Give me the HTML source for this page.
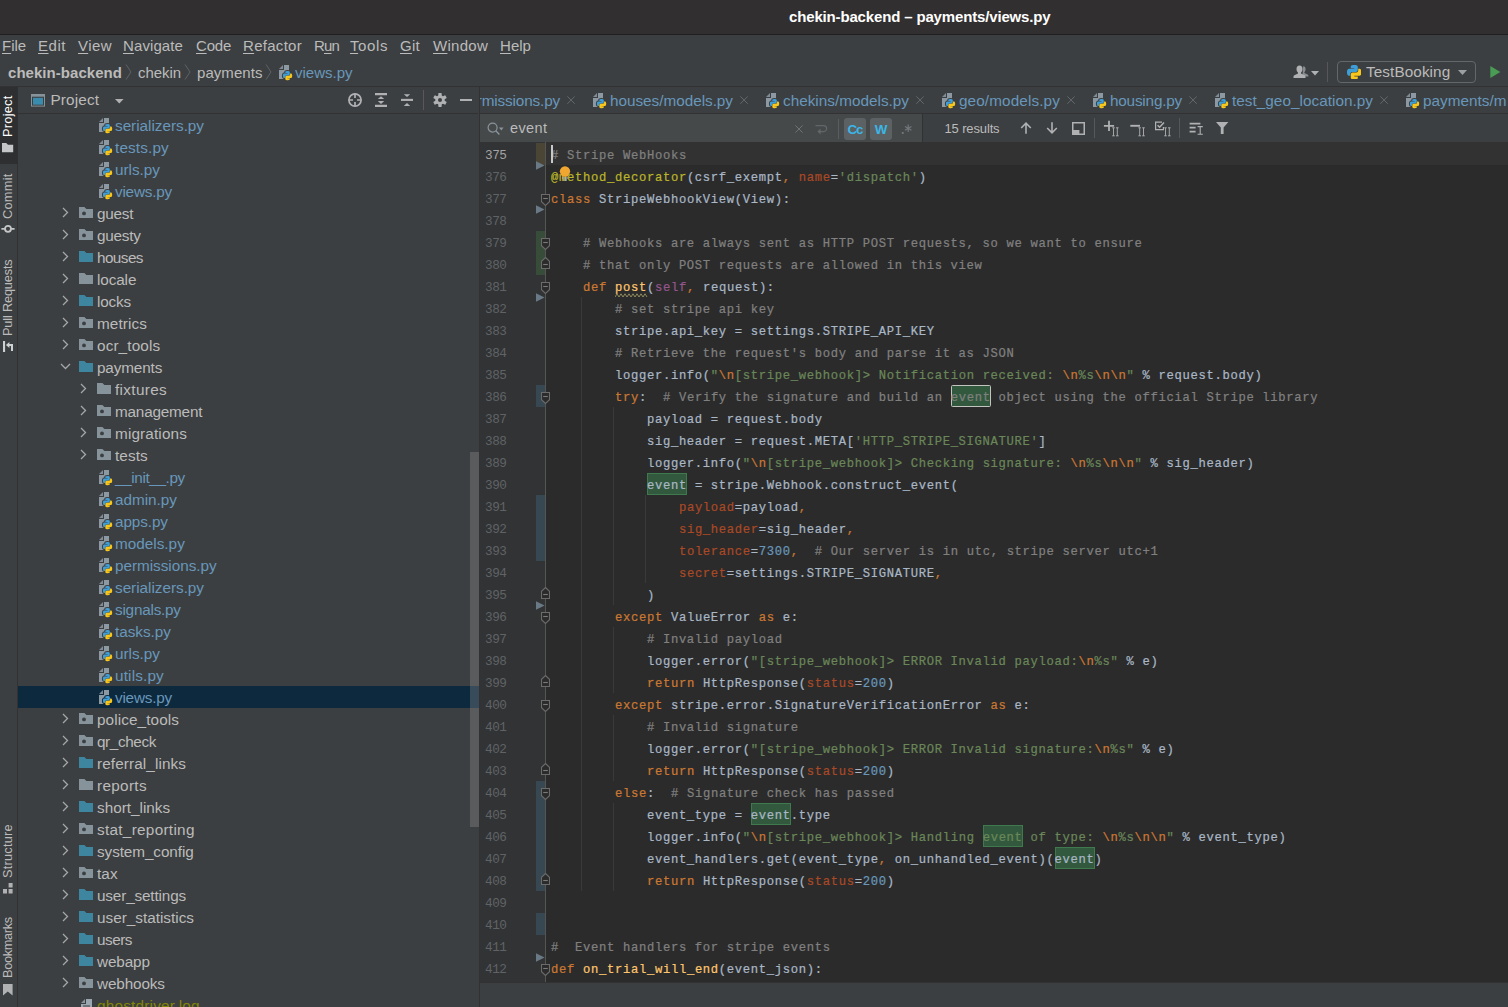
<!DOCTYPE html>
<html><head><meta charset="utf-8"><title>chekin-backend – payments/views.py</title>
<style>html,body{margin:0;padding:0}body{width:1508px;height:1007px;background:#3c3f41;position:relative;overflow:hidden;font-family:"Liberation Sans",sans-serif}</style>
</head><body>
<div style="position:absolute;left:0;top:0;width:1508px;height:34px;background:#322f30"></div>
<div style="position:absolute;left:0;top:34px;width:1508px;height:1px;background:#201f1f"></div>
<div style="position:absolute;left:789px;top:9px;font:bold 15px/1 'Liberation Sans', sans-serif;color:#ffffff;white-space:pre;letter-spacing:-0.155px;">chekin-backend – payments/views.py</div>
<div style="position:absolute;left:2px;top:38px;font:15px/1 'Liberation Sans', sans-serif;color:#bbbbbb;white-space:pre;letter-spacing:-0.043px"><span style="text-decoration:underline;text-underline-offset:1.5px">F</span>ile</div>
<div style="position:absolute;left:38px;top:38px;font:15px/1 'Liberation Sans', sans-serif;color:#bbbbbb;white-space:pre;letter-spacing:0.535px"><span style="text-decoration:underline;text-underline-offset:1.5px">E</span>dit</div>
<div style="position:absolute;left:78px;top:38px;font:15px/1 'Liberation Sans', sans-serif;color:#bbbbbb;white-space:pre;letter-spacing:0.438px"><span style="text-decoration:underline;text-underline-offset:1.5px">V</span>iew</div>
<div style="position:absolute;left:123px;top:38px;font:15px/1 'Liberation Sans', sans-serif;color:#bbbbbb;white-space:pre;letter-spacing:0.100px"><span style="text-decoration:underline;text-underline-offset:1.5px">N</span>avigate</div>
<div style="position:absolute;left:196px;top:38px;font:15px/1 'Liberation Sans', sans-serif;color:#bbbbbb;white-space:pre;letter-spacing:-0.215px"><span style="text-decoration:underline;text-underline-offset:1.5px">C</span>ode</div>
<div style="position:absolute;left:243px;top:38px;font:15px/1 'Liberation Sans', sans-serif;color:#bbbbbb;white-space:pre;letter-spacing:0.287px"><span style="text-decoration:underline;text-underline-offset:1.5px">R</span>efactor</div>
<div style="position:absolute;left:314px;top:38px;font:15px/1 'Liberation Sans', sans-serif;color:#bbbbbb;white-space:pre;letter-spacing:-0.844px">R<span style="text-decoration:underline;text-underline-offset:1.5px">u</span>n</div>
<div style="position:absolute;left:350px;top:38px;font:15px/1 'Liberation Sans', sans-serif;color:#bbbbbb;white-space:pre;letter-spacing:0.594px"><span style="text-decoration:underline;text-underline-offset:1.5px">T</span>ools</div>
<div style="position:absolute;left:400px;top:38px;font:15px/1 'Liberation Sans', sans-serif;color:#bbbbbb;white-space:pre;letter-spacing:0.276px"><span style="text-decoration:underline;text-underline-offset:1.5px">G</span>it</div>
<div style="position:absolute;left:433px;top:38px;font:15px/1 'Liberation Sans', sans-serif;color:#bbbbbb;white-space:pre;letter-spacing:0.273px"><span style="text-decoration:underline;text-underline-offset:1.5px">W</span>indow</div>
<div style="position:absolute;left:500px;top:38px;font:15px/1 'Liberation Sans', sans-serif;color:#bbbbbb;white-space:pre;letter-spacing:0.035px"><span style="text-decoration:underline;text-underline-offset:1.5px">H</span>elp</div>
<div style="position:absolute;left:8px;top:65px;font:bold 15px/1 'Liberation Sans', sans-serif;color:#bbbbbb;white-space:pre;letter-spacing:0.045px;">chekin-backend</div>
<div style="position:absolute;left:138px;top:65px;font:normal 15px/1 'Liberation Sans', sans-serif;color:#bbbbbb;white-space:pre;letter-spacing:-0.060px;">chekin</div>
<div style="position:absolute;left:197px;top:65px;font:normal 15px/1 'Liberation Sans', sans-serif;color:#bbbbbb;white-space:pre;letter-spacing:0.057px;">payments</div>
<div style="position:absolute;left:295px;top:65px;font:normal 15px/1 'Liberation Sans', sans-serif;color:#6897bb;white-space:pre;letter-spacing:-0.004px;">views.py</div>
<svg style="position:absolute;left:125px;top:64.3px" width="7" height="16" viewBox="0 0 7 16"><path d="M1,0.5 L6,8 L1,15.5" fill="none" stroke="#5f6365" stroke-width="1"/></svg>
<svg style="position:absolute;left:184px;top:64.3px" width="7" height="16" viewBox="0 0 7 16"><path d="M1,0.5 L6,8 L1,15.5" fill="none" stroke="#5f6365" stroke-width="1"/></svg>
<svg style="position:absolute;left:265px;top:64.3px" width="7" height="16" viewBox="0 0 7 16"><path d="M1,0.5 L6,8 L1,15.5" fill="none" stroke="#5f6365" stroke-width="1"/></svg>
<svg style="position:absolute;left:278px;top:64px" width="16" height="17" viewBox="0 0 16 17"><path d="M1,5 L5,1 V5 Z" fill="#8c99a2" opacity=".85"/><path d="M6,1 H11 V15 H1 V6 H6 Z" fill="#8c99a2"/><g transform="translate(4.9,7) scale(.93)"><path d="M4.9,0 C2.4,0 2.6,1.1 2.6,1.1 V2.2 H5 V2.6 H1.6 C1.6,2.6 0,2.4 0,5 C0,7.5 1.4,7.4 1.4,7.4 H2.3 V6.2 C2.3,6.2 2.2,4.8 3.7,4.8 H6.1 C6.1,4.8 7.4,4.8 7.4,3.5 V1.3 C7.4,1.3 7.6,0 4.9,0 Z" fill="#3c3f41" stroke="#3c3f41" stroke-width="2.2" stroke-linejoin="round"/><path d="M5.1,10 C7.6,10 7.4,8.9 7.4,8.9 V7.8 H5 V7.4 H8.4 C8.4,7.4 10,7.6 10,5 C10,2.5 8.6,2.6 8.6,2.6 H7.7 V3.8 C7.7,3.8 7.8,5.2 6.3,5.2 H3.9 C3.9,5.2 2.6,5.2 2.6,6.5 V8.7 C2.6,8.7 2.4,10 5.1,10 Z" fill="#3c3f41" stroke="#3c3f41" stroke-width="2.2" stroke-linejoin="round"/><path d="M4.9,0 C2.4,0 2.6,1.1 2.6,1.1 V2.2 H5 V2.6 H1.6 C1.6,2.6 0,2.4 0,5 C0,7.5 1.4,7.4 1.4,7.4 H2.3 V6.2 C2.3,6.2 2.2,4.8 3.7,4.8 H6.1 C6.1,4.8 7.4,4.8 7.4,3.5 V1.3 C7.4,1.3 7.6,0 4.9,0 Z" fill="#3e9fd8"/><path d="M5.1,10 C7.6,10 7.4,8.9 7.4,8.9 V7.8 H5 V7.4 H8.4 C8.4,7.4 10,7.6 10,5 C10,2.5 8.6,2.6 8.6,2.6 H7.7 V3.8 C7.7,3.8 7.8,5.2 6.3,5.2 H3.9 C3.9,5.2 2.6,5.2 2.6,6.5 V8.7 C2.6,8.7 2.4,10 5.1,10 Z" fill="#f9c71b"/></g></svg>
<svg style="position:absolute;left:1293px;top:65px" width="16" height="14" viewBox="0 0 16 14"><path d="M10.2,1.2 c1.6,0 2.4,1.2 2.4,2.8 c0,1.6 -0.7,2.6 -1.2,3.1 v0.9 l3.2,1.6 c0.5,0.3 0.8,0.7 0.8,1.3 v0.6 h-6 z" fill="#8a8d8f"/><path d="M6.5,0.6 c2,0 3,1.4 3,3.3 c0,1.8 -0.8,3 -1.5,3.6 v1 l3.6,1.8 c0.6,0.3 0.9,0.8 0.9,1.4 v1.3 h-12 v-1.3 c0,-0.6 0.3,-1.1 0.9,-1.4 l3.6,-1.8 v-1 c-0.7,-0.6 -1.5,-1.8 -1.5,-3.6 c0,-1.9 1,-3.3 3,-3.3 z" fill="#afb1b3"/></svg>
<svg style="position:absolute;left:1311px;top:70.5px" width="8" height="5" viewBox="0 0 8 5"><path d="M0,0 H8 L4,4.4 Z" fill="#afb1b3"/></svg>
<div style="position:absolute;left:1327px;top:62px;width:1px;height:20px;background:#555759"></div>
<div style="position:absolute;left:1337px;top:61px;width:137px;height:20px;border:1px solid #646769;border-radius:4px;box-sizing:content-box"></div>
<svg style="position:absolute;left:1346.8px;top:64.6px" width="14.6" height="14.6" viewBox="0 0 10 10"><path d="M4.9,0 C2.4,0 2.6,1.1 2.6,1.1 V2.2 H5 V2.6 H1.6 C1.6,2.6 0,2.4 0,5 C0,7.5 1.4,7.4 1.4,7.4 H2.3 V6.2 C2.3,6.2 2.2,4.8 3.7,4.8 H6.1 C6.1,4.8 7.4,4.8 7.4,3.5 V1.3 C7.4,1.3 7.6,0 4.9,0 Z" fill="#3e9fd8"/><path d="M5.1,10 C7.6,10 7.4,8.9 7.4,8.9 V7.8 H5 V7.4 H8.4 C8.4,7.4 10,7.6 10,5 C10,2.5 8.6,2.6 8.6,2.6 H7.7 V3.8 C7.7,3.8 7.8,5.2 6.3,5.2 H3.9 C3.9,5.2 2.6,5.2 2.6,6.5 V8.7 C2.6,8.7 2.4,10 5.1,10 Z" fill="#f9c71b"/></svg>
<div style="position:absolute;left:1366px;top:64px;font:normal 15.3px/1 'Liberation Sans', sans-serif;color:#bbbbbb;white-space:pre;letter-spacing:0.087px;">TestBooking</div>
<svg style="position:absolute;left:1457.5px;top:70px" width="9" height="5" viewBox="0 0 9 5"><path d="M0,0 H9 L4.5,5 Z" fill="#9da0a2"/></svg>
<svg style="position:absolute;left:1490px;top:66px" width="11" height="12" viewBox="0 0 11 12"><path d="M0.3,0 L10.3,6 L0.3,12 Z" fill="#499c54"/></svg>
<div style="position:absolute;left:0;top:86px;width:1508px;height:1px;background:#323232"></div>
<div style="position:absolute;left:0;top:87px;width:17px;height:920px;background:#3c3f41"></div>
<div style="position:absolute;left:17px;top:87px;width:1px;height:920px;background:#323232"></div>
<div style="position:absolute;left:0;top:87px;width:18px;height:76.5px;background:#2d2f30"></div>
<div style="position:absolute;left:0px;top:137px;width:41.5px;height:15px;transform-origin:0 0;transform:rotate(-90deg);font:12.8px/15px 'Liberation Sans', sans-serif;color:#ffffff;white-space:pre;letter-spacing:0.239px">Project</div>
<div style="position:absolute;left:0px;top:218.8px;width:45.60000000000002px;height:15px;transform-origin:0 0;transform:rotate(-90deg);font:12.8px/15px 'Liberation Sans', sans-serif;color:#bbbbbb;white-space:pre;letter-spacing:0.254px">Commit</div>
<div style="position:absolute;left:0px;top:335.5px;width:76.5px;height:15px;transform-origin:0 0;transform:rotate(-90deg);font:12.8px/15px 'Liberation Sans', sans-serif;color:#bbbbbb;white-space:pre;letter-spacing:-0.190px">Pull Requests</div>
<div style="position:absolute;left:0px;top:877.8px;width:53.799999999999955px;height:15px;transform-origin:0 0;transform:rotate(-90deg);font:12.8px/15px 'Liberation Sans', sans-serif;color:#bbbbbb;white-space:pre;letter-spacing:0.209px">Structure</div>
<div style="position:absolute;left:0px;top:978.2px;width:60.90000000000009px;height:15px;transform-origin:0 0;transform:rotate(-90deg);font:12.8px/15px 'Liberation Sans', sans-serif;color:#bbbbbb;white-space:pre;letter-spacing:-0.346px">Bookmarks</div>
<svg style="position:absolute;left:2px;top:142.6px" width="12" height="10" viewBox="0 0 12 10"><path d="M0,0 H4.2 L6,1.8 H11.2 V9.3 H0 Z" fill="#c4c6c7"/></svg>
<svg style="position:absolute;left:0.5px;top:224px" width="14" height="10" viewBox="0 0 14 10"><circle cx="7" cy="4.8" r="3" fill="none" stroke="#c4c6c7" stroke-width="1.8"/><path d="M0.4,4.8 H4 M10,4.8 H13.6" stroke="#c4c6c7" stroke-width="1.8"/></svg>
<svg style="position:absolute;left:3px;top:341px" width="11" height="11" viewBox="0 0 11 11"><rect x="0" y="0" width="2.1" height="11" fill="#cfd0d1"/><path d="M9,10 V4 H5.4" fill="none" stroke="#cfd0d1" stroke-width="2"/><path d="M6.4,0.9 L2.9,4 L6.4,7.1 Z" fill="#cfd0d1"/></svg>
<svg style="position:absolute;left:3px;top:883px" width="10" height="11" viewBox="0 0 10 11"><path d="M5.6,0 H9.6 V4.4 H5.6 Z M0,6 H4 V10.6 H0 Z M5.6,6 H9.6 V10.6 H5.6 Z" fill="#afb1b3"/></svg>
<svg style="position:absolute;left:3px;top:984px" width="10" height="12" viewBox="0 0 10 12"><path d="M0,0 H9.6 V11.5 L4.8,7.4 L0,11.5 Z" fill="#afb1b3"/></svg>
<svg style="position:absolute;left:31px;top:94.2px" width="14" height="12.6" viewBox="0 0 14 12.6"><rect x="0.5" y="0.5" width="13" height="11.6" fill="none" stroke="#87939a"/><rect x="0.5" y="0.5" width="13" height="2.2" fill="#87939a"/><rect x="2" y="3.8" width="10" height="6.9" fill="#3a8cae"/></svg>
<div style="position:absolute;left:50.5px;top:92px;font:normal 15.3px/1 'Liberation Sans', sans-serif;color:#bbbbbb;white-space:pre;letter-spacing:0.142px;">Project</div>
<svg style="position:absolute;left:115px;top:99px" width="9" height="5" viewBox="0 0 9 5"><path d="M0,0 H8.6 L4.3,4.6 Z" fill="#afb1b3"/></svg>
<svg style="position:absolute;left:348px;top:93px" width="14" height="14" viewBox="0 0 14 14"><circle cx="7" cy="7" r="6.1" fill="none" stroke="#afb1b3" stroke-width="1.7"/><path d="M7,0.6 V5 M7,9 V13.4 M0.6,7 H5 M9,7 H13.4" stroke="#afb1b3" stroke-width="1.7"/></svg>
<svg style="position:absolute;left:375px;top:93px" width="12" height="14" viewBox="0 0 12 14"><path d="M0,1.1 H12 M0,12.9 H12" stroke="#afb1b3" stroke-width="2.1"/><path d="M6,3.3 L9.2,6 H2.8 Z M6,10.9 L9.2,8.1 H2.8 Z" fill="#afb1b3"/></svg>
<svg style="position:absolute;left:401px;top:93px" width="12" height="14" viewBox="0 0 12 14"><path d="M0,6.9 H12" stroke="#afb1b3" stroke-width="2.1"/><path d="M6,4 L9.2,1.2 H2.8 Z M6,10.1 L9.2,12.9 H2.8 Z" fill="#afb1b3"/></svg>
<div style="position:absolute;left:423px;top:90px;width:1px;height:20px;background:#5a5856"></div>
<svg style="position:absolute;left:433px;top:93px" width="14" height="14" viewBox="0 0 14 14"><g fill="#afb1b3"><circle cx="7" cy="7" r="4.7"/><rect x="5.3" y="0.1" width="3.4" height="3.6" rx="0.6" transform="rotate(0 7 7)"/><rect x="5.3" y="0.1" width="3.4" height="3.6" rx="0.6" transform="rotate(60 7 7)"/><rect x="5.3" y="0.1" width="3.4" height="3.6" rx="0.6" transform="rotate(120 7 7)"/><rect x="5.3" y="0.1" width="3.4" height="3.6" rx="0.6" transform="rotate(180 7 7)"/><rect x="5.3" y="0.1" width="3.4" height="3.6" rx="0.6" transform="rotate(240 7 7)"/><rect x="5.3" y="0.1" width="3.4" height="3.6" rx="0.6" transform="rotate(300 7 7)"/></g><circle cx="7" cy="7" r="2" fill="#3c3f41"/></svg>
<div style="position:absolute;left:460px;top:98.8px;width:12px;height:2.3px;background:#afb1b3"></div>
<div style="position:absolute;left:18px;top:113px;width:460px;height:1px;background:#323232"></div>
<div style="position:absolute;left:18px;top:114px;width:461px;height:893px;overflow:hidden">
<svg style="position:absolute;left:80px;top:3px" width="16" height="17" viewBox="0 0 16 17"><path d="M1,5 L5,1 V5 Z" fill="#8c99a2" opacity=".85"/><path d="M6,1 H11 V15 H1 V6 H6 Z" fill="#8c99a2"/><g transform="translate(4.9,7) scale(.93)"><path d="M4.9,0 C2.4,0 2.6,1.1 2.6,1.1 V2.2 H5 V2.6 H1.6 C1.6,2.6 0,2.4 0,5 C0,7.5 1.4,7.4 1.4,7.4 H2.3 V6.2 C2.3,6.2 2.2,4.8 3.7,4.8 H6.1 C6.1,4.8 7.4,4.8 7.4,3.5 V1.3 C7.4,1.3 7.6,0 4.9,0 Z" fill="#3c3f41" stroke="#3c3f41" stroke-width="2.2" stroke-linejoin="round"/><path d="M5.1,10 C7.6,10 7.4,8.9 7.4,8.9 V7.8 H5 V7.4 H8.4 C8.4,7.4 10,7.6 10,5 C10,2.5 8.6,2.6 8.6,2.6 H7.7 V3.8 C7.7,3.8 7.8,5.2 6.3,5.2 H3.9 C3.9,5.2 2.6,5.2 2.6,6.5 V8.7 C2.6,8.7 2.4,10 5.1,10 Z" fill="#3c3f41" stroke="#3c3f41" stroke-width="2.2" stroke-linejoin="round"/><path d="M4.9,0 C2.4,0 2.6,1.1 2.6,1.1 V2.2 H5 V2.6 H1.6 C1.6,2.6 0,2.4 0,5 C0,7.5 1.4,7.4 1.4,7.4 H2.3 V6.2 C2.3,6.2 2.2,4.8 3.7,4.8 H6.1 C6.1,4.8 7.4,4.8 7.4,3.5 V1.3 C7.4,1.3 7.6,0 4.9,0 Z" fill="#3e9fd8"/><path d="M5.1,10 C7.6,10 7.4,8.9 7.4,8.9 V7.8 H5 V7.4 H8.4 C8.4,7.4 10,7.6 10,5 C10,2.5 8.6,2.6 8.6,2.6 H7.7 V3.8 C7.7,3.8 7.8,5.2 6.3,5.2 H3.9 C3.9,5.2 2.6,5.2 2.6,6.5 V8.7 C2.6,8.7 2.4,10 5.1,10 Z" fill="#f9c71b"/></g></svg>
<div style="position:absolute;left:97px;top:4px;font:normal 15.3px/1 'Liberation Sans', sans-serif;color:#6897bb;white-space:pre;letter-spacing:-0.019px;">serializers.py</div>
<svg style="position:absolute;left:80px;top:25px" width="16" height="17" viewBox="0 0 16 17"><path d="M1,5 L5,1 V5 Z" fill="#8c99a2" opacity=".85"/><path d="M6,1 H11 V15 H1 V6 H6 Z" fill="#8c99a2"/><g transform="translate(4.9,7) scale(.93)"><path d="M4.9,0 C2.4,0 2.6,1.1 2.6,1.1 V2.2 H5 V2.6 H1.6 C1.6,2.6 0,2.4 0,5 C0,7.5 1.4,7.4 1.4,7.4 H2.3 V6.2 C2.3,6.2 2.2,4.8 3.7,4.8 H6.1 C6.1,4.8 7.4,4.8 7.4,3.5 V1.3 C7.4,1.3 7.6,0 4.9,0 Z" fill="#3c3f41" stroke="#3c3f41" stroke-width="2.2" stroke-linejoin="round"/><path d="M5.1,10 C7.6,10 7.4,8.9 7.4,8.9 V7.8 H5 V7.4 H8.4 C8.4,7.4 10,7.6 10,5 C10,2.5 8.6,2.6 8.6,2.6 H7.7 V3.8 C7.7,3.8 7.8,5.2 6.3,5.2 H3.9 C3.9,5.2 2.6,5.2 2.6,6.5 V8.7 C2.6,8.7 2.4,10 5.1,10 Z" fill="#3c3f41" stroke="#3c3f41" stroke-width="2.2" stroke-linejoin="round"/><path d="M4.9,0 C2.4,0 2.6,1.1 2.6,1.1 V2.2 H5 V2.6 H1.6 C1.6,2.6 0,2.4 0,5 C0,7.5 1.4,7.4 1.4,7.4 H2.3 V6.2 C2.3,6.2 2.2,4.8 3.7,4.8 H6.1 C6.1,4.8 7.4,4.8 7.4,3.5 V1.3 C7.4,1.3 7.6,0 4.9,0 Z" fill="#3e9fd8"/><path d="M5.1,10 C7.6,10 7.4,8.9 7.4,8.9 V7.8 H5 V7.4 H8.4 C8.4,7.4 10,7.6 10,5 C10,2.5 8.6,2.6 8.6,2.6 H7.7 V3.8 C7.7,3.8 7.8,5.2 6.3,5.2 H3.9 C3.9,5.2 2.6,5.2 2.6,6.5 V8.7 C2.6,8.7 2.4,10 5.1,10 Z" fill="#f9c71b"/></g></svg>
<div style="position:absolute;left:97px;top:26px;font:normal 15.3px/1 'Liberation Sans', sans-serif;color:#6897bb;white-space:pre;letter-spacing:0.148px;">tests.py</div>
<svg style="position:absolute;left:80px;top:47px" width="16" height="17" viewBox="0 0 16 17"><path d="M1,5 L5,1 V5 Z" fill="#8c99a2" opacity=".85"/><path d="M6,1 H11 V15 H1 V6 H6 Z" fill="#8c99a2"/><g transform="translate(4.9,7) scale(.93)"><path d="M4.9,0 C2.4,0 2.6,1.1 2.6,1.1 V2.2 H5 V2.6 H1.6 C1.6,2.6 0,2.4 0,5 C0,7.5 1.4,7.4 1.4,7.4 H2.3 V6.2 C2.3,6.2 2.2,4.8 3.7,4.8 H6.1 C6.1,4.8 7.4,4.8 7.4,3.5 V1.3 C7.4,1.3 7.6,0 4.9,0 Z" fill="#3c3f41" stroke="#3c3f41" stroke-width="2.2" stroke-linejoin="round"/><path d="M5.1,10 C7.6,10 7.4,8.9 7.4,8.9 V7.8 H5 V7.4 H8.4 C8.4,7.4 10,7.6 10,5 C10,2.5 8.6,2.6 8.6,2.6 H7.7 V3.8 C7.7,3.8 7.8,5.2 6.3,5.2 H3.9 C3.9,5.2 2.6,5.2 2.6,6.5 V8.7 C2.6,8.7 2.4,10 5.1,10 Z" fill="#3c3f41" stroke="#3c3f41" stroke-width="2.2" stroke-linejoin="round"/><path d="M4.9,0 C2.4,0 2.6,1.1 2.6,1.1 V2.2 H5 V2.6 H1.6 C1.6,2.6 0,2.4 0,5 C0,7.5 1.4,7.4 1.4,7.4 H2.3 V6.2 C2.3,6.2 2.2,4.8 3.7,4.8 H6.1 C6.1,4.8 7.4,4.8 7.4,3.5 V1.3 C7.4,1.3 7.6,0 4.9,0 Z" fill="#3e9fd8"/><path d="M5.1,10 C7.6,10 7.4,8.9 7.4,8.9 V7.8 H5 V7.4 H8.4 C8.4,7.4 10,7.6 10,5 C10,2.5 8.6,2.6 8.6,2.6 H7.7 V3.8 C7.7,3.8 7.8,5.2 6.3,5.2 H3.9 C3.9,5.2 2.6,5.2 2.6,6.5 V8.7 C2.6,8.7 2.4,10 5.1,10 Z" fill="#f9c71b"/></g></svg>
<div style="position:absolute;left:97px;top:48px;font:normal 15.3px/1 'Liberation Sans', sans-serif;color:#6897bb;white-space:pre;letter-spacing:-0.023px;">urls.py</div>
<svg style="position:absolute;left:80px;top:69px" width="16" height="17" viewBox="0 0 16 17"><path d="M1,5 L5,1 V5 Z" fill="#8c99a2" opacity=".85"/><path d="M6,1 H11 V15 H1 V6 H6 Z" fill="#8c99a2"/><g transform="translate(4.9,7) scale(.93)"><path d="M4.9,0 C2.4,0 2.6,1.1 2.6,1.1 V2.2 H5 V2.6 H1.6 C1.6,2.6 0,2.4 0,5 C0,7.5 1.4,7.4 1.4,7.4 H2.3 V6.2 C2.3,6.2 2.2,4.8 3.7,4.8 H6.1 C6.1,4.8 7.4,4.8 7.4,3.5 V1.3 C7.4,1.3 7.6,0 4.9,0 Z" fill="#3c3f41" stroke="#3c3f41" stroke-width="2.2" stroke-linejoin="round"/><path d="M5.1,10 C7.6,10 7.4,8.9 7.4,8.9 V7.8 H5 V7.4 H8.4 C8.4,7.4 10,7.6 10,5 C10,2.5 8.6,2.6 8.6,2.6 H7.7 V3.8 C7.7,3.8 7.8,5.2 6.3,5.2 H3.9 C3.9,5.2 2.6,5.2 2.6,6.5 V8.7 C2.6,8.7 2.4,10 5.1,10 Z" fill="#3c3f41" stroke="#3c3f41" stroke-width="2.2" stroke-linejoin="round"/><path d="M4.9,0 C2.4,0 2.6,1.1 2.6,1.1 V2.2 H5 V2.6 H1.6 C1.6,2.6 0,2.4 0,5 C0,7.5 1.4,7.4 1.4,7.4 H2.3 V6.2 C2.3,6.2 2.2,4.8 3.7,4.8 H6.1 C6.1,4.8 7.4,4.8 7.4,3.5 V1.3 C7.4,1.3 7.6,0 4.9,0 Z" fill="#3e9fd8"/><path d="M5.1,10 C7.6,10 7.4,8.9 7.4,8.9 V7.8 H5 V7.4 H8.4 C8.4,7.4 10,7.6 10,5 C10,2.5 8.6,2.6 8.6,2.6 H7.7 V3.8 C7.7,3.8 7.8,5.2 6.3,5.2 H3.9 C3.9,5.2 2.6,5.2 2.6,6.5 V8.7 C2.6,8.7 2.4,10 5.1,10 Z" fill="#f9c71b"/></g></svg>
<div style="position:absolute;left:97px;top:70px;font:normal 15.3px/1 'Liberation Sans', sans-serif;color:#6897bb;white-space:pre;letter-spacing:-0.220px;">views.py</div>
<svg style="position:absolute;left:43.5px;top:92.5px" width="7" height="11" viewBox="0 0 7 11"><path d="M1,1 L5.5,5.5 L1,10" fill="none" stroke="#a4a7a9" stroke-width="1.3"/></svg>
<svg style="position:absolute;left:61px;top:93px" width="14" height="11" viewBox="0 0 14 11"><path d="M0,0 H5.4 L7.4,2 H14 V11 H0 Z" fill="#87939a"/><circle cx="5" cy="6.4" r="1.9" fill="#3c3f41"/></svg>
<div style="position:absolute;left:79px;top:92px;font:normal 15.3px/1 'Liberation Sans', sans-serif;color:#bbbbbb;white-space:pre;letter-spacing:-0.224px;">guest</div>
<svg style="position:absolute;left:43.5px;top:114.5px" width="7" height="11" viewBox="0 0 7 11"><path d="M1,1 L5.5,5.5 L1,10" fill="none" stroke="#a4a7a9" stroke-width="1.3"/></svg>
<svg style="position:absolute;left:61px;top:115px" width="14" height="11" viewBox="0 0 14 11"><path d="M0,0 H5.4 L7.4,2 H14 V11 H0 Z" fill="#87939a"/><circle cx="5" cy="6.4" r="1.9" fill="#3c3f41"/></svg>
<div style="position:absolute;left:79px;top:114px;font:normal 15.3px/1 'Liberation Sans', sans-serif;color:#bbbbbb;white-space:pre;letter-spacing:-0.246px;">guesty</div>
<svg style="position:absolute;left:43.5px;top:136.5px" width="7" height="11" viewBox="0 0 7 11"><path d="M1,1 L5.5,5.5 L1,10" fill="none" stroke="#a4a7a9" stroke-width="1.3"/></svg>
<svg style="position:absolute;left:61px;top:137px" width="14" height="11" viewBox="0 0 14 11"><path d="M0,0 H5.4 L7.4,2 H14 V11 H0 Z" fill="#3e86a0"/></svg>
<div style="position:absolute;left:79px;top:136px;font:normal 15.3px/1 'Liberation Sans', sans-serif;color:#bbbbbb;white-space:pre;letter-spacing:-0.571px;">houses</div>
<svg style="position:absolute;left:43.5px;top:158.5px" width="7" height="11" viewBox="0 0 7 11"><path d="M1,1 L5.5,5.5 L1,10" fill="none" stroke="#a4a7a9" stroke-width="1.3"/></svg>
<svg style="position:absolute;left:61px;top:159px" width="14" height="11" viewBox="0 0 14 11"><path d="M0,0 H5.4 L7.4,2 H14 V11 H0 Z" fill="#87939a"/></svg>
<div style="position:absolute;left:79px;top:158px;font:normal 15.3px/1 'Liberation Sans', sans-serif;color:#bbbbbb;white-space:pre;letter-spacing:-0.111px;">locale</div>
<svg style="position:absolute;left:43.5px;top:180.5px" width="7" height="11" viewBox="0 0 7 11"><path d="M1,1 L5.5,5.5 L1,10" fill="none" stroke="#a4a7a9" stroke-width="1.3"/></svg>
<svg style="position:absolute;left:61px;top:181px" width="14" height="11" viewBox="0 0 14 11"><path d="M0,0 H5.4 L7.4,2 H14 V11 H0 Z" fill="#3e86a0"/></svg>
<div style="position:absolute;left:79px;top:180px;font:normal 15.3px/1 'Liberation Sans', sans-serif;color:#bbbbbb;white-space:pre;letter-spacing:-0.172px;">locks</div>
<svg style="position:absolute;left:43.5px;top:202.5px" width="7" height="11" viewBox="0 0 7 11"><path d="M1,1 L5.5,5.5 L1,10" fill="none" stroke="#a4a7a9" stroke-width="1.3"/></svg>
<svg style="position:absolute;left:61px;top:203px" width="14" height="11" viewBox="0 0 14 11"><path d="M0,0 H5.4 L7.4,2 H14 V11 H0 Z" fill="#87939a"/><circle cx="5" cy="6.4" r="1.9" fill="#3c3f41"/></svg>
<div style="position:absolute;left:79px;top:202px;font:normal 15.3px/1 'Liberation Sans', sans-serif;color:#bbbbbb;white-space:pre;letter-spacing:0.086px;">metrics</div>
<svg style="position:absolute;left:43.5px;top:224.5px" width="7" height="11" viewBox="0 0 7 11"><path d="M1,1 L5.5,5.5 L1,10" fill="none" stroke="#a4a7a9" stroke-width="1.3"/></svg>
<svg style="position:absolute;left:61px;top:225px" width="14" height="11" viewBox="0 0 14 11"><path d="M0,0 H5.4 L7.4,2 H14 V11 H0 Z" fill="#87939a"/><circle cx="5" cy="6.4" r="1.9" fill="#3c3f41"/></svg>
<div style="position:absolute;left:79px;top:224px;font:normal 15.3px/1 'Liberation Sans', sans-serif;color:#bbbbbb;white-space:pre;letter-spacing:0.125px;">ocr_tools</div>
<svg style="position:absolute;left:41.5px;top:248.5px" width="11" height="7" viewBox="0 0 11 7"><path d="M1,1 L5.5,5.5 L10,1" fill="none" stroke="#a4a7a9" stroke-width="1.3"/></svg>
<svg style="position:absolute;left:61px;top:247px" width="14" height="11" viewBox="0 0 14 11"><path d="M0,0 H5.4 L7.4,2 H14 V11 H0 Z" fill="#3e86a0"/></svg>
<div style="position:absolute;left:79px;top:246px;font:normal 15.3px/1 'Liberation Sans', sans-serif;color:#bbbbbb;white-space:pre;letter-spacing:-0.141px;">payments</div>
<svg style="position:absolute;left:61.5px;top:268.5px" width="7" height="11" viewBox="0 0 7 11"><path d="M1,1 L5.5,5.5 L1,10" fill="none" stroke="#a4a7a9" stroke-width="1.3"/></svg>
<svg style="position:absolute;left:79px;top:269px" width="14" height="11" viewBox="0 0 14 11"><path d="M0,0 H5.4 L7.4,2 H14 V11 H0 Z" fill="#87939a"/></svg>
<div style="position:absolute;left:97px;top:268px;font:normal 15.3px/1 'Liberation Sans', sans-serif;color:#bbbbbb;white-space:pre;letter-spacing:0.348px;">fixtures</div>
<svg style="position:absolute;left:61.5px;top:290.5px" width="7" height="11" viewBox="0 0 7 11"><path d="M1,1 L5.5,5.5 L1,10" fill="none" stroke="#a4a7a9" stroke-width="1.3"/></svg>
<svg style="position:absolute;left:79px;top:291px" width="14" height="11" viewBox="0 0 14 11"><path d="M0,0 H5.4 L7.4,2 H14 V11 H0 Z" fill="#87939a"/><circle cx="5" cy="6.4" r="1.9" fill="#3c3f41"/></svg>
<div style="position:absolute;left:97px;top:290px;font:normal 15.3px/1 'Liberation Sans', sans-serif;color:#bbbbbb;white-space:pre;letter-spacing:-0.200px;">management</div>
<svg style="position:absolute;left:61.5px;top:312.5px" width="7" height="11" viewBox="0 0 7 11"><path d="M1,1 L5.5,5.5 L1,10" fill="none" stroke="#a4a7a9" stroke-width="1.3"/></svg>
<svg style="position:absolute;left:79px;top:313px" width="14" height="11" viewBox="0 0 14 11"><path d="M0,0 H5.4 L7.4,2 H14 V11 H0 Z" fill="#87939a"/><circle cx="5" cy="6.4" r="1.9" fill="#3c3f41"/></svg>
<div style="position:absolute;left:97px;top:312px;font:normal 15.3px/1 'Liberation Sans', sans-serif;color:#bbbbbb;white-space:pre;letter-spacing:0.144px;">migrations</div>
<svg style="position:absolute;left:61.5px;top:334.5px" width="7" height="11" viewBox="0 0 7 11"><path d="M1,1 L5.5,5.5 L1,10" fill="none" stroke="#a4a7a9" stroke-width="1.3"/></svg>
<svg style="position:absolute;left:79px;top:335px" width="14" height="11" viewBox="0 0 14 11"><path d="M0,0 H5.4 L7.4,2 H14 V11 H0 Z" fill="#87939a"/><circle cx="5" cy="6.4" r="1.9" fill="#3c3f41"/></svg>
<div style="position:absolute;left:97px;top:334px;font:normal 15.3px/1 'Liberation Sans', sans-serif;color:#bbbbbb;white-space:pre;letter-spacing:0.117px;">tests</div>
<svg style="position:absolute;left:80px;top:355px" width="16" height="17" viewBox="0 0 16 17"><path d="M1,5 L5,1 V5 Z" fill="#8c99a2" opacity=".85"/><path d="M6,1 H11 V15 H1 V6 H6 Z" fill="#8c99a2"/><g transform="translate(4.9,7) scale(.93)"><path d="M4.9,0 C2.4,0 2.6,1.1 2.6,1.1 V2.2 H5 V2.6 H1.6 C1.6,2.6 0,2.4 0,5 C0,7.5 1.4,7.4 1.4,7.4 H2.3 V6.2 C2.3,6.2 2.2,4.8 3.7,4.8 H6.1 C6.1,4.8 7.4,4.8 7.4,3.5 V1.3 C7.4,1.3 7.6,0 4.9,0 Z" fill="#3c3f41" stroke="#3c3f41" stroke-width="2.2" stroke-linejoin="round"/><path d="M5.1,10 C7.6,10 7.4,8.9 7.4,8.9 V7.8 H5 V7.4 H8.4 C8.4,7.4 10,7.6 10,5 C10,2.5 8.6,2.6 8.6,2.6 H7.7 V3.8 C7.7,3.8 7.8,5.2 6.3,5.2 H3.9 C3.9,5.2 2.6,5.2 2.6,6.5 V8.7 C2.6,8.7 2.4,10 5.1,10 Z" fill="#3c3f41" stroke="#3c3f41" stroke-width="2.2" stroke-linejoin="round"/><path d="M4.9,0 C2.4,0 2.6,1.1 2.6,1.1 V2.2 H5 V2.6 H1.6 C1.6,2.6 0,2.4 0,5 C0,7.5 1.4,7.4 1.4,7.4 H2.3 V6.2 C2.3,6.2 2.2,4.8 3.7,4.8 H6.1 C6.1,4.8 7.4,4.8 7.4,3.5 V1.3 C7.4,1.3 7.6,0 4.9,0 Z" fill="#3e9fd8"/><path d="M5.1,10 C7.6,10 7.4,8.9 7.4,8.9 V7.8 H5 V7.4 H8.4 C8.4,7.4 10,7.6 10,5 C10,2.5 8.6,2.6 8.6,2.6 H7.7 V3.8 C7.7,3.8 7.8,5.2 6.3,5.2 H3.9 C3.9,5.2 2.6,5.2 2.6,6.5 V8.7 C2.6,8.7 2.4,10 5.1,10 Z" fill="#f9c71b"/></g></svg>
<div style="position:absolute;left:97px;top:356px;font:normal 15.3px/1 'Liberation Sans', sans-serif;color:#6897bb;white-space:pre;letter-spacing:-0.382px;">__init__.py</div>
<svg style="position:absolute;left:80px;top:377px" width="16" height="17" viewBox="0 0 16 17"><path d="M1,5 L5,1 V5 Z" fill="#8c99a2" opacity=".85"/><path d="M6,1 H11 V15 H1 V6 H6 Z" fill="#8c99a2"/><g transform="translate(4.9,7) scale(.93)"><path d="M4.9,0 C2.4,0 2.6,1.1 2.6,1.1 V2.2 H5 V2.6 H1.6 C1.6,2.6 0,2.4 0,5 C0,7.5 1.4,7.4 1.4,7.4 H2.3 V6.2 C2.3,6.2 2.2,4.8 3.7,4.8 H6.1 C6.1,4.8 7.4,4.8 7.4,3.5 V1.3 C7.4,1.3 7.6,0 4.9,0 Z" fill="#3c3f41" stroke="#3c3f41" stroke-width="2.2" stroke-linejoin="round"/><path d="M5.1,10 C7.6,10 7.4,8.9 7.4,8.9 V7.8 H5 V7.4 H8.4 C8.4,7.4 10,7.6 10,5 C10,2.5 8.6,2.6 8.6,2.6 H7.7 V3.8 C7.7,3.8 7.8,5.2 6.3,5.2 H3.9 C3.9,5.2 2.6,5.2 2.6,6.5 V8.7 C2.6,8.7 2.4,10 5.1,10 Z" fill="#3c3f41" stroke="#3c3f41" stroke-width="2.2" stroke-linejoin="round"/><path d="M4.9,0 C2.4,0 2.6,1.1 2.6,1.1 V2.2 H5 V2.6 H1.6 C1.6,2.6 0,2.4 0,5 C0,7.5 1.4,7.4 1.4,7.4 H2.3 V6.2 C2.3,6.2 2.2,4.8 3.7,4.8 H6.1 C6.1,4.8 7.4,4.8 7.4,3.5 V1.3 C7.4,1.3 7.6,0 4.9,0 Z" fill="#3e9fd8"/><path d="M5.1,10 C7.6,10 7.4,8.9 7.4,8.9 V7.8 H5 V7.4 H8.4 C8.4,7.4 10,7.6 10,5 C10,2.5 8.6,2.6 8.6,2.6 H7.7 V3.8 C7.7,3.8 7.8,5.2 6.3,5.2 H3.9 C3.9,5.2 2.6,5.2 2.6,6.5 V8.7 C2.6,8.7 2.4,10 5.1,10 Z" fill="#f9c71b"/></g></svg>
<div style="position:absolute;left:97px;top:378px;font:normal 15.3px/1 'Liberation Sans', sans-serif;color:#6897bb;white-space:pre;letter-spacing:-0.035px;">admin.py</div>
<svg style="position:absolute;left:80px;top:399px" width="16" height="17" viewBox="0 0 16 17"><path d="M1,5 L5,1 V5 Z" fill="#8c99a2" opacity=".85"/><path d="M6,1 H11 V15 H1 V6 H6 Z" fill="#8c99a2"/><g transform="translate(4.9,7) scale(.93)"><path d="M4.9,0 C2.4,0 2.6,1.1 2.6,1.1 V2.2 H5 V2.6 H1.6 C1.6,2.6 0,2.4 0,5 C0,7.5 1.4,7.4 1.4,7.4 H2.3 V6.2 C2.3,6.2 2.2,4.8 3.7,4.8 H6.1 C6.1,4.8 7.4,4.8 7.4,3.5 V1.3 C7.4,1.3 7.6,0 4.9,0 Z" fill="#3c3f41" stroke="#3c3f41" stroke-width="2.2" stroke-linejoin="round"/><path d="M5.1,10 C7.6,10 7.4,8.9 7.4,8.9 V7.8 H5 V7.4 H8.4 C8.4,7.4 10,7.6 10,5 C10,2.5 8.6,2.6 8.6,2.6 H7.7 V3.8 C7.7,3.8 7.8,5.2 6.3,5.2 H3.9 C3.9,5.2 2.6,5.2 2.6,6.5 V8.7 C2.6,8.7 2.4,10 5.1,10 Z" fill="#3c3f41" stroke="#3c3f41" stroke-width="2.2" stroke-linejoin="round"/><path d="M4.9,0 C2.4,0 2.6,1.1 2.6,1.1 V2.2 H5 V2.6 H1.6 C1.6,2.6 0,2.4 0,5 C0,7.5 1.4,7.4 1.4,7.4 H2.3 V6.2 C2.3,6.2 2.2,4.8 3.7,4.8 H6.1 C6.1,4.8 7.4,4.8 7.4,3.5 V1.3 C7.4,1.3 7.6,0 4.9,0 Z" fill="#3e9fd8"/><path d="M5.1,10 C7.6,10 7.4,8.9 7.4,8.9 V7.8 H5 V7.4 H8.4 C8.4,7.4 10,7.6 10,5 C10,2.5 8.6,2.6 8.6,2.6 H7.7 V3.8 C7.7,3.8 7.8,5.2 6.3,5.2 H3.9 C3.9,5.2 2.6,5.2 2.6,6.5 V8.7 C2.6,8.7 2.4,10 5.1,10 Z" fill="#f9c71b"/></g></svg>
<div style="position:absolute;left:97px;top:400px;font:normal 15.3px/1 'Liberation Sans', sans-serif;color:#6897bb;white-space:pre;letter-spacing:-0.097px;">apps.py</div>
<svg style="position:absolute;left:80px;top:421px" width="16" height="17" viewBox="0 0 16 17"><path d="M1,5 L5,1 V5 Z" fill="#8c99a2" opacity=".85"/><path d="M6,1 H11 V15 H1 V6 H6 Z" fill="#8c99a2"/><g transform="translate(4.9,7) scale(.93)"><path d="M4.9,0 C2.4,0 2.6,1.1 2.6,1.1 V2.2 H5 V2.6 H1.6 C1.6,2.6 0,2.4 0,5 C0,7.5 1.4,7.4 1.4,7.4 H2.3 V6.2 C2.3,6.2 2.2,4.8 3.7,4.8 H6.1 C6.1,4.8 7.4,4.8 7.4,3.5 V1.3 C7.4,1.3 7.6,0 4.9,0 Z" fill="#3c3f41" stroke="#3c3f41" stroke-width="2.2" stroke-linejoin="round"/><path d="M5.1,10 C7.6,10 7.4,8.9 7.4,8.9 V7.8 H5 V7.4 H8.4 C8.4,7.4 10,7.6 10,5 C10,2.5 8.6,2.6 8.6,2.6 H7.7 V3.8 C7.7,3.8 7.8,5.2 6.3,5.2 H3.9 C3.9,5.2 2.6,5.2 2.6,6.5 V8.7 C2.6,8.7 2.4,10 5.1,10 Z" fill="#3c3f41" stroke="#3c3f41" stroke-width="2.2" stroke-linejoin="round"/><path d="M4.9,0 C2.4,0 2.6,1.1 2.6,1.1 V2.2 H5 V2.6 H1.6 C1.6,2.6 0,2.4 0,5 C0,7.5 1.4,7.4 1.4,7.4 H2.3 V6.2 C2.3,6.2 2.2,4.8 3.7,4.8 H6.1 C6.1,4.8 7.4,4.8 7.4,3.5 V1.3 C7.4,1.3 7.6,0 4.9,0 Z" fill="#3e9fd8"/><path d="M5.1,10 C7.6,10 7.4,8.9 7.4,8.9 V7.8 H5 V7.4 H8.4 C8.4,7.4 10,7.6 10,5 C10,2.5 8.6,2.6 8.6,2.6 H7.7 V3.8 C7.7,3.8 7.8,5.2 6.3,5.2 H3.9 C3.9,5.2 2.6,5.2 2.6,6.5 V8.7 C2.6,8.7 2.4,10 5.1,10 Z" fill="#f9c71b"/></g></svg>
<div style="position:absolute;left:97px;top:422px;font:normal 15.3px/1 'Liberation Sans', sans-serif;color:#6897bb;white-space:pre;letter-spacing:0.009px;">models.py</div>
<svg style="position:absolute;left:80px;top:443px" width="16" height="17" viewBox="0 0 16 17"><path d="M1,5 L5,1 V5 Z" fill="#8c99a2" opacity=".85"/><path d="M6,1 H11 V15 H1 V6 H6 Z" fill="#8c99a2"/><g transform="translate(4.9,7) scale(.93)"><path d="M4.9,0 C2.4,0 2.6,1.1 2.6,1.1 V2.2 H5 V2.6 H1.6 C1.6,2.6 0,2.4 0,5 C0,7.5 1.4,7.4 1.4,7.4 H2.3 V6.2 C2.3,6.2 2.2,4.8 3.7,4.8 H6.1 C6.1,4.8 7.4,4.8 7.4,3.5 V1.3 C7.4,1.3 7.6,0 4.9,0 Z" fill="#3c3f41" stroke="#3c3f41" stroke-width="2.2" stroke-linejoin="round"/><path d="M5.1,10 C7.6,10 7.4,8.9 7.4,8.9 V7.8 H5 V7.4 H8.4 C8.4,7.4 10,7.6 10,5 C10,2.5 8.6,2.6 8.6,2.6 H7.7 V3.8 C7.7,3.8 7.8,5.2 6.3,5.2 H3.9 C3.9,5.2 2.6,5.2 2.6,6.5 V8.7 C2.6,8.7 2.4,10 5.1,10 Z" fill="#3c3f41" stroke="#3c3f41" stroke-width="2.2" stroke-linejoin="round"/><path d="M4.9,0 C2.4,0 2.6,1.1 2.6,1.1 V2.2 H5 V2.6 H1.6 C1.6,2.6 0,2.4 0,5 C0,7.5 1.4,7.4 1.4,7.4 H2.3 V6.2 C2.3,6.2 2.2,4.8 3.7,4.8 H6.1 C6.1,4.8 7.4,4.8 7.4,3.5 V1.3 C7.4,1.3 7.6,0 4.9,0 Z" fill="#3e9fd8"/><path d="M5.1,10 C7.6,10 7.4,8.9 7.4,8.9 V7.8 H5 V7.4 H8.4 C8.4,7.4 10,7.6 10,5 C10,2.5 8.6,2.6 8.6,2.6 H7.7 V3.8 C7.7,3.8 7.8,5.2 6.3,5.2 H3.9 C3.9,5.2 2.6,5.2 2.6,6.5 V8.7 C2.6,8.7 2.4,10 5.1,10 Z" fill="#f9c71b"/></g></svg>
<div style="position:absolute;left:97px;top:444px;font:normal 15.3px/1 'Liberation Sans', sans-serif;color:#6897bb;white-space:pre;letter-spacing:-0.030px;">permissions.py</div>
<svg style="position:absolute;left:80px;top:465px" width="16" height="17" viewBox="0 0 16 17"><path d="M1,5 L5,1 V5 Z" fill="#8c99a2" opacity=".85"/><path d="M6,1 H11 V15 H1 V6 H6 Z" fill="#8c99a2"/><g transform="translate(4.9,7) scale(.93)"><path d="M4.9,0 C2.4,0 2.6,1.1 2.6,1.1 V2.2 H5 V2.6 H1.6 C1.6,2.6 0,2.4 0,5 C0,7.5 1.4,7.4 1.4,7.4 H2.3 V6.2 C2.3,6.2 2.2,4.8 3.7,4.8 H6.1 C6.1,4.8 7.4,4.8 7.4,3.5 V1.3 C7.4,1.3 7.6,0 4.9,0 Z" fill="#3c3f41" stroke="#3c3f41" stroke-width="2.2" stroke-linejoin="round"/><path d="M5.1,10 C7.6,10 7.4,8.9 7.4,8.9 V7.8 H5 V7.4 H8.4 C8.4,7.4 10,7.6 10,5 C10,2.5 8.6,2.6 8.6,2.6 H7.7 V3.8 C7.7,3.8 7.8,5.2 6.3,5.2 H3.9 C3.9,5.2 2.6,5.2 2.6,6.5 V8.7 C2.6,8.7 2.4,10 5.1,10 Z" fill="#3c3f41" stroke="#3c3f41" stroke-width="2.2" stroke-linejoin="round"/><path d="M4.9,0 C2.4,0 2.6,1.1 2.6,1.1 V2.2 H5 V2.6 H1.6 C1.6,2.6 0,2.4 0,5 C0,7.5 1.4,7.4 1.4,7.4 H2.3 V6.2 C2.3,6.2 2.2,4.8 3.7,4.8 H6.1 C6.1,4.8 7.4,4.8 7.4,3.5 V1.3 C7.4,1.3 7.6,0 4.9,0 Z" fill="#3e9fd8"/><path d="M5.1,10 C7.6,10 7.4,8.9 7.4,8.9 V7.8 H5 V7.4 H8.4 C8.4,7.4 10,7.6 10,5 C10,2.5 8.6,2.6 8.6,2.6 H7.7 V3.8 C7.7,3.8 7.8,5.2 6.3,5.2 H3.9 C3.9,5.2 2.6,5.2 2.6,6.5 V8.7 C2.6,8.7 2.4,10 5.1,10 Z" fill="#f9c71b"/></g></svg>
<div style="position:absolute;left:97px;top:466px;font:normal 15.3px/1 'Liberation Sans', sans-serif;color:#6897bb;white-space:pre;letter-spacing:-0.019px;">serializers.py</div>
<svg style="position:absolute;left:80px;top:487px" width="16" height="17" viewBox="0 0 16 17"><path d="M1,5 L5,1 V5 Z" fill="#8c99a2" opacity=".85"/><path d="M6,1 H11 V15 H1 V6 H6 Z" fill="#8c99a2"/><g transform="translate(4.9,7) scale(.93)"><path d="M4.9,0 C2.4,0 2.6,1.1 2.6,1.1 V2.2 H5 V2.6 H1.6 C1.6,2.6 0,2.4 0,5 C0,7.5 1.4,7.4 1.4,7.4 H2.3 V6.2 C2.3,6.2 2.2,4.8 3.7,4.8 H6.1 C6.1,4.8 7.4,4.8 7.4,3.5 V1.3 C7.4,1.3 7.6,0 4.9,0 Z" fill="#3c3f41" stroke="#3c3f41" stroke-width="2.2" stroke-linejoin="round"/><path d="M5.1,10 C7.6,10 7.4,8.9 7.4,8.9 V7.8 H5 V7.4 H8.4 C8.4,7.4 10,7.6 10,5 C10,2.5 8.6,2.6 8.6,2.6 H7.7 V3.8 C7.7,3.8 7.8,5.2 6.3,5.2 H3.9 C3.9,5.2 2.6,5.2 2.6,6.5 V8.7 C2.6,8.7 2.4,10 5.1,10 Z" fill="#3c3f41" stroke="#3c3f41" stroke-width="2.2" stroke-linejoin="round"/><path d="M4.9,0 C2.4,0 2.6,1.1 2.6,1.1 V2.2 H5 V2.6 H1.6 C1.6,2.6 0,2.4 0,5 C0,7.5 1.4,7.4 1.4,7.4 H2.3 V6.2 C2.3,6.2 2.2,4.8 3.7,4.8 H6.1 C6.1,4.8 7.4,4.8 7.4,3.5 V1.3 C7.4,1.3 7.6,0 4.9,0 Z" fill="#3e9fd8"/><path d="M5.1,10 C7.6,10 7.4,8.9 7.4,8.9 V7.8 H5 V7.4 H8.4 C8.4,7.4 10,7.6 10,5 C10,2.5 8.6,2.6 8.6,2.6 H7.7 V3.8 C7.7,3.8 7.8,5.2 6.3,5.2 H3.9 C3.9,5.2 2.6,5.2 2.6,6.5 V8.7 C2.6,8.7 2.4,10 5.1,10 Z" fill="#f9c71b"/></g></svg>
<div style="position:absolute;left:97px;top:488px;font:normal 15.3px/1 'Liberation Sans', sans-serif;color:#6897bb;white-space:pre;letter-spacing:-0.223px;">signals.py</div>
<svg style="position:absolute;left:80px;top:509px" width="16" height="17" viewBox="0 0 16 17"><path d="M1,5 L5,1 V5 Z" fill="#8c99a2" opacity=".85"/><path d="M6,1 H11 V15 H1 V6 H6 Z" fill="#8c99a2"/><g transform="translate(4.9,7) scale(.93)"><path d="M4.9,0 C2.4,0 2.6,1.1 2.6,1.1 V2.2 H5 V2.6 H1.6 C1.6,2.6 0,2.4 0,5 C0,7.5 1.4,7.4 1.4,7.4 H2.3 V6.2 C2.3,6.2 2.2,4.8 3.7,4.8 H6.1 C6.1,4.8 7.4,4.8 7.4,3.5 V1.3 C7.4,1.3 7.6,0 4.9,0 Z" fill="#3c3f41" stroke="#3c3f41" stroke-width="2.2" stroke-linejoin="round"/><path d="M5.1,10 C7.6,10 7.4,8.9 7.4,8.9 V7.8 H5 V7.4 H8.4 C8.4,7.4 10,7.6 10,5 C10,2.5 8.6,2.6 8.6,2.6 H7.7 V3.8 C7.7,3.8 7.8,5.2 6.3,5.2 H3.9 C3.9,5.2 2.6,5.2 2.6,6.5 V8.7 C2.6,8.7 2.4,10 5.1,10 Z" fill="#3c3f41" stroke="#3c3f41" stroke-width="2.2" stroke-linejoin="round"/><path d="M4.9,0 C2.4,0 2.6,1.1 2.6,1.1 V2.2 H5 V2.6 H1.6 C1.6,2.6 0,2.4 0,5 C0,7.5 1.4,7.4 1.4,7.4 H2.3 V6.2 C2.3,6.2 2.2,4.8 3.7,4.8 H6.1 C6.1,4.8 7.4,4.8 7.4,3.5 V1.3 C7.4,1.3 7.6,0 4.9,0 Z" fill="#3e9fd8"/><path d="M5.1,10 C7.6,10 7.4,8.9 7.4,8.9 V7.8 H5 V7.4 H8.4 C8.4,7.4 10,7.6 10,5 C10,2.5 8.6,2.6 8.6,2.6 H7.7 V3.8 C7.7,3.8 7.8,5.2 6.3,5.2 H3.9 C3.9,5.2 2.6,5.2 2.6,6.5 V8.7 C2.6,8.7 2.4,10 5.1,10 Z" fill="#f9c71b"/></g></svg>
<div style="position:absolute;left:97px;top:510px;font:normal 15.3px/1 'Liberation Sans', sans-serif;color:#6897bb;white-space:pre;letter-spacing:-0.039px;">tasks.py</div>
<svg style="position:absolute;left:80px;top:531px" width="16" height="17" viewBox="0 0 16 17"><path d="M1,5 L5,1 V5 Z" fill="#8c99a2" opacity=".85"/><path d="M6,1 H11 V15 H1 V6 H6 Z" fill="#8c99a2"/><g transform="translate(4.9,7) scale(.93)"><path d="M4.9,0 C2.4,0 2.6,1.1 2.6,1.1 V2.2 H5 V2.6 H1.6 C1.6,2.6 0,2.4 0,5 C0,7.5 1.4,7.4 1.4,7.4 H2.3 V6.2 C2.3,6.2 2.2,4.8 3.7,4.8 H6.1 C6.1,4.8 7.4,4.8 7.4,3.5 V1.3 C7.4,1.3 7.6,0 4.9,0 Z" fill="#3c3f41" stroke="#3c3f41" stroke-width="2.2" stroke-linejoin="round"/><path d="M5.1,10 C7.6,10 7.4,8.9 7.4,8.9 V7.8 H5 V7.4 H8.4 C8.4,7.4 10,7.6 10,5 C10,2.5 8.6,2.6 8.6,2.6 H7.7 V3.8 C7.7,3.8 7.8,5.2 6.3,5.2 H3.9 C3.9,5.2 2.6,5.2 2.6,6.5 V8.7 C2.6,8.7 2.4,10 5.1,10 Z" fill="#3c3f41" stroke="#3c3f41" stroke-width="2.2" stroke-linejoin="round"/><path d="M4.9,0 C2.4,0 2.6,1.1 2.6,1.1 V2.2 H5 V2.6 H1.6 C1.6,2.6 0,2.4 0,5 C0,7.5 1.4,7.4 1.4,7.4 H2.3 V6.2 C2.3,6.2 2.2,4.8 3.7,4.8 H6.1 C6.1,4.8 7.4,4.8 7.4,3.5 V1.3 C7.4,1.3 7.6,0 4.9,0 Z" fill="#3e9fd8"/><path d="M5.1,10 C7.6,10 7.4,8.9 7.4,8.9 V7.8 H5 V7.4 H8.4 C8.4,7.4 10,7.6 10,5 C10,2.5 8.6,2.6 8.6,2.6 H7.7 V3.8 C7.7,3.8 7.8,5.2 6.3,5.2 H3.9 C3.9,5.2 2.6,5.2 2.6,6.5 V8.7 C2.6,8.7 2.4,10 5.1,10 Z" fill="#f9c71b"/></g></svg>
<div style="position:absolute;left:97px;top:532px;font:normal 15.3px/1 'Liberation Sans', sans-serif;color:#6897bb;white-space:pre;letter-spacing:-0.023px;">urls.py</div>
<svg style="position:absolute;left:80px;top:553px" width="16" height="17" viewBox="0 0 16 17"><path d="M1,5 L5,1 V5 Z" fill="#8c99a2" opacity=".85"/><path d="M6,1 H11 V15 H1 V6 H6 Z" fill="#8c99a2"/><g transform="translate(4.9,7) scale(.93)"><path d="M4.9,0 C2.4,0 2.6,1.1 2.6,1.1 V2.2 H5 V2.6 H1.6 C1.6,2.6 0,2.4 0,5 C0,7.5 1.4,7.4 1.4,7.4 H2.3 V6.2 C2.3,6.2 2.2,4.8 3.7,4.8 H6.1 C6.1,4.8 7.4,4.8 7.4,3.5 V1.3 C7.4,1.3 7.6,0 4.9,0 Z" fill="#3c3f41" stroke="#3c3f41" stroke-width="2.2" stroke-linejoin="round"/><path d="M5.1,10 C7.6,10 7.4,8.9 7.4,8.9 V7.8 H5 V7.4 H8.4 C8.4,7.4 10,7.6 10,5 C10,2.5 8.6,2.6 8.6,2.6 H7.7 V3.8 C7.7,3.8 7.8,5.2 6.3,5.2 H3.9 C3.9,5.2 2.6,5.2 2.6,6.5 V8.7 C2.6,8.7 2.4,10 5.1,10 Z" fill="#3c3f41" stroke="#3c3f41" stroke-width="2.2" stroke-linejoin="round"/><path d="M4.9,0 C2.4,0 2.6,1.1 2.6,1.1 V2.2 H5 V2.6 H1.6 C1.6,2.6 0,2.4 0,5 C0,7.5 1.4,7.4 1.4,7.4 H2.3 V6.2 C2.3,6.2 2.2,4.8 3.7,4.8 H6.1 C6.1,4.8 7.4,4.8 7.4,3.5 V1.3 C7.4,1.3 7.6,0 4.9,0 Z" fill="#3e9fd8"/><path d="M5.1,10 C7.6,10 7.4,8.9 7.4,8.9 V7.8 H5 V7.4 H8.4 C8.4,7.4 10,7.6 10,5 C10,2.5 8.6,2.6 8.6,2.6 H7.7 V3.8 C7.7,3.8 7.8,5.2 6.3,5.2 H3.9 C3.9,5.2 2.6,5.2 2.6,6.5 V8.7 C2.6,8.7 2.4,10 5.1,10 Z" fill="#f9c71b"/></g></svg>
<div style="position:absolute;left:97px;top:554px;font:normal 15.3px/1 'Liberation Sans', sans-serif;color:#6897bb;white-space:pre;letter-spacing:0.161px;">utils.py</div>
<div style="position:absolute;left:0;top:572px;width:461px;height:22px;background:#0d293e"></div>
<svg style="position:absolute;left:80px;top:575px" width="16" height="17" viewBox="0 0 16 17"><path d="M1,5 L5,1 V5 Z" fill="#8c99a2" opacity=".85"/><path d="M6,1 H11 V15 H1 V6 H6 Z" fill="#8c99a2"/><g transform="translate(4.9,7) scale(.93)"><path d="M4.9,0 C2.4,0 2.6,1.1 2.6,1.1 V2.2 H5 V2.6 H1.6 C1.6,2.6 0,2.4 0,5 C0,7.5 1.4,7.4 1.4,7.4 H2.3 V6.2 C2.3,6.2 2.2,4.8 3.7,4.8 H6.1 C6.1,4.8 7.4,4.8 7.4,3.5 V1.3 C7.4,1.3 7.6,0 4.9,0 Z" fill="#0d293e" stroke="#0d293e" stroke-width="2.2" stroke-linejoin="round"/><path d="M5.1,10 C7.6,10 7.4,8.9 7.4,8.9 V7.8 H5 V7.4 H8.4 C8.4,7.4 10,7.6 10,5 C10,2.5 8.6,2.6 8.6,2.6 H7.7 V3.8 C7.7,3.8 7.8,5.2 6.3,5.2 H3.9 C3.9,5.2 2.6,5.2 2.6,6.5 V8.7 C2.6,8.7 2.4,10 5.1,10 Z" fill="#0d293e" stroke="#0d293e" stroke-width="2.2" stroke-linejoin="round"/><path d="M4.9,0 C2.4,0 2.6,1.1 2.6,1.1 V2.2 H5 V2.6 H1.6 C1.6,2.6 0,2.4 0,5 C0,7.5 1.4,7.4 1.4,7.4 H2.3 V6.2 C2.3,6.2 2.2,4.8 3.7,4.8 H6.1 C6.1,4.8 7.4,4.8 7.4,3.5 V1.3 C7.4,1.3 7.6,0 4.9,0 Z" fill="#3e9fd8"/><path d="M5.1,10 C7.6,10 7.4,8.9 7.4,8.9 V7.8 H5 V7.4 H8.4 C8.4,7.4 10,7.6 10,5 C10,2.5 8.6,2.6 8.6,2.6 H7.7 V3.8 C7.7,3.8 7.8,5.2 6.3,5.2 H3.9 C3.9,5.2 2.6,5.2 2.6,6.5 V8.7 C2.6,8.7 2.4,10 5.1,10 Z" fill="#f9c71b"/></g></svg>
<div style="position:absolute;left:97px;top:576px;font:normal 15.3px/1 'Liberation Sans', sans-serif;color:#6897bb;white-space:pre;letter-spacing:-0.220px;">views.py</div>
<svg style="position:absolute;left:43.5px;top:598.5px" width="7" height="11" viewBox="0 0 7 11"><path d="M1,1 L5.5,5.5 L1,10" fill="none" stroke="#a4a7a9" stroke-width="1.3"/></svg>
<svg style="position:absolute;left:61px;top:599px" width="14" height="11" viewBox="0 0 14 11"><path d="M0,0 H5.4 L7.4,2 H14 V11 H0 Z" fill="#87939a"/><circle cx="5" cy="6.4" r="1.9" fill="#3c3f41"/></svg>
<div style="position:absolute;left:79px;top:598px;font:normal 15.3px/1 'Liberation Sans', sans-serif;color:#bbbbbb;white-space:pre;letter-spacing:0.109px;">police_tools</div>
<svg style="position:absolute;left:43.5px;top:620.5px" width="7" height="11" viewBox="0 0 7 11"><path d="M1,1 L5.5,5.5 L1,10" fill="none" stroke="#a4a7a9" stroke-width="1.3"/></svg>
<svg style="position:absolute;left:61px;top:621px" width="14" height="11" viewBox="0 0 14 11"><path d="M0,0 H5.4 L7.4,2 H14 V11 H0 Z" fill="#87939a"/><circle cx="5" cy="6.4" r="1.9" fill="#3c3f41"/></svg>
<div style="position:absolute;left:79px;top:620px;font:normal 15.3px/1 'Liberation Sans', sans-serif;color:#bbbbbb;white-space:pre;letter-spacing:-0.397px;">qr_check</div>
<svg style="position:absolute;left:43.5px;top:642.5px" width="7" height="11" viewBox="0 0 7 11"><path d="M1,1 L5.5,5.5 L1,10" fill="none" stroke="#a4a7a9" stroke-width="1.3"/></svg>
<svg style="position:absolute;left:61px;top:643px" width="14" height="11" viewBox="0 0 14 11"><path d="M0,0 H5.4 L7.4,2 H14 V11 H0 Z" fill="#3e86a0"/></svg>
<div style="position:absolute;left:79px;top:642px;font:normal 15.3px/1 'Liberation Sans', sans-serif;color:#bbbbbb;white-space:pre;letter-spacing:0.103px;">referral_links</div>
<svg style="position:absolute;left:43.5px;top:664.5px" width="7" height="11" viewBox="0 0 7 11"><path d="M1,1 L5.5,5.5 L1,10" fill="none" stroke="#a4a7a9" stroke-width="1.3"/></svg>
<svg style="position:absolute;left:61px;top:665px" width="14" height="11" viewBox="0 0 14 11"><path d="M0,0 H5.4 L7.4,2 H14 V11 H0 Z" fill="#87939a"/></svg>
<div style="position:absolute;left:79px;top:664px;font:normal 15.3px/1 'Liberation Sans', sans-serif;color:#bbbbbb;white-space:pre;letter-spacing:0.327px;">reports</div>
<svg style="position:absolute;left:43.5px;top:686.5px" width="7" height="11" viewBox="0 0 7 11"><path d="M1,1 L5.5,5.5 L1,10" fill="none" stroke="#a4a7a9" stroke-width="1.3"/></svg>
<svg style="position:absolute;left:61px;top:687px" width="14" height="11" viewBox="0 0 14 11"><path d="M0,0 H5.4 L7.4,2 H14 V11 H0 Z" fill="#3e86a0"/></svg>
<div style="position:absolute;left:79px;top:686px;font:normal 15.3px/1 'Liberation Sans', sans-serif;color:#bbbbbb;white-space:pre;letter-spacing:-0.002px;">short_links</div>
<svg style="position:absolute;left:43.5px;top:708.5px" width="7" height="11" viewBox="0 0 7 11"><path d="M1,1 L5.5,5.5 L1,10" fill="none" stroke="#a4a7a9" stroke-width="1.3"/></svg>
<svg style="position:absolute;left:61px;top:709px" width="14" height="11" viewBox="0 0 14 11"><path d="M0,0 H5.4 L7.4,2 H14 V11 H0 Z" fill="#87939a"/><circle cx="5" cy="6.4" r="1.9" fill="#3c3f41"/></svg>
<div style="position:absolute;left:79px;top:708px;font:normal 15.3px/1 'Liberation Sans', sans-serif;color:#bbbbbb;white-space:pre;letter-spacing:0.297px;">stat_reporting</div>
<svg style="position:absolute;left:43.5px;top:730.5px" width="7" height="11" viewBox="0 0 7 11"><path d="M1,1 L5.5,5.5 L1,10" fill="none" stroke="#a4a7a9" stroke-width="1.3"/></svg>
<svg style="position:absolute;left:61px;top:731px" width="14" height="11" viewBox="0 0 14 11"><path d="M0,0 H5.4 L7.4,2 H14 V11 H0 Z" fill="#3e86a0"/></svg>
<div style="position:absolute;left:79px;top:730px;font:normal 15.3px/1 'Liberation Sans', sans-serif;color:#bbbbbb;white-space:pre;letter-spacing:-0.083px;">system_config</div>
<svg style="position:absolute;left:43.5px;top:752.5px" width="7" height="11" viewBox="0 0 7 11"><path d="M1,1 L5.5,5.5 L1,10" fill="none" stroke="#a4a7a9" stroke-width="1.3"/></svg>
<svg style="position:absolute;left:61px;top:753px" width="14" height="11" viewBox="0 0 14 11"><path d="M0,0 H5.4 L7.4,2 H14 V11 H0 Z" fill="#87939a"/><circle cx="5" cy="6.4" r="1.9" fill="#3c3f41"/></svg>
<div style="position:absolute;left:79px;top:752px;font:normal 15.3px/1 'Liberation Sans', sans-serif;color:#bbbbbb;white-space:pre;letter-spacing:0.098px;">tax</div>
<svg style="position:absolute;left:43.5px;top:774.5px" width="7" height="11" viewBox="0 0 7 11"><path d="M1,1 L5.5,5.5 L1,10" fill="none" stroke="#a4a7a9" stroke-width="1.3"/></svg>
<svg style="position:absolute;left:61px;top:775px" width="14" height="11" viewBox="0 0 14 11"><path d="M0,0 H5.4 L7.4,2 H14 V11 H0 Z" fill="#3e86a0"/></svg>
<div style="position:absolute;left:79px;top:774px;font:normal 15.3px/1 'Liberation Sans', sans-serif;color:#bbbbbb;white-space:pre;letter-spacing:-0.153px;">user_settings</div>
<svg style="position:absolute;left:43.5px;top:796.5px" width="7" height="11" viewBox="0 0 7 11"><path d="M1,1 L5.5,5.5 L1,10" fill="none" stroke="#a4a7a9" stroke-width="1.3"/></svg>
<svg style="position:absolute;left:61px;top:797px" width="14" height="11" viewBox="0 0 14 11"><path d="M0,0 H5.4 L7.4,2 H14 V11 H0 Z" fill="#3e86a0"/></svg>
<div style="position:absolute;left:79px;top:796px;font:normal 15.3px/1 'Liberation Sans', sans-serif;color:#bbbbbb;white-space:pre;letter-spacing:0.005px;">user_statistics</div>
<svg style="position:absolute;left:43.5px;top:818.5px" width="7" height="11" viewBox="0 0 7 11"><path d="M1,1 L5.5,5.5 L1,10" fill="none" stroke="#a4a7a9" stroke-width="1.3"/></svg>
<svg style="position:absolute;left:61px;top:819px" width="14" height="11" viewBox="0 0 14 11"><path d="M0,0 H5.4 L7.4,2 H14 V11 H0 Z" fill="#3e86a0"/></svg>
<div style="position:absolute;left:79px;top:818px;font:normal 15.3px/1 'Liberation Sans', sans-serif;color:#bbbbbb;white-space:pre;letter-spacing:-0.481px;">users</div>
<svg style="position:absolute;left:43.5px;top:840.5px" width="7" height="11" viewBox="0 0 7 11"><path d="M1,1 L5.5,5.5 L1,10" fill="none" stroke="#a4a7a9" stroke-width="1.3"/></svg>
<svg style="position:absolute;left:61px;top:841px" width="14" height="11" viewBox="0 0 14 11"><path d="M0,0 H5.4 L7.4,2 H14 V11 H0 Z" fill="#3e86a0"/></svg>
<div style="position:absolute;left:79px;top:840px;font:normal 15.3px/1 'Liberation Sans', sans-serif;color:#bbbbbb;white-space:pre;letter-spacing:-0.116px;">webapp</div>
<svg style="position:absolute;left:43.5px;top:862.5px" width="7" height="11" viewBox="0 0 7 11"><path d="M1,1 L5.5,5.5 L1,10" fill="none" stroke="#a4a7a9" stroke-width="1.3"/></svg>
<svg style="position:absolute;left:61px;top:863px" width="14" height="11" viewBox="0 0 14 11"><path d="M0,0 H5.4 L7.4,2 H14 V11 H0 Z" fill="#87939a"/><circle cx="5" cy="6.4" r="1.9" fill="#3c3f41"/></svg>
<div style="position:absolute;left:79px;top:862px;font:normal 15.3px/1 'Liberation Sans', sans-serif;color:#bbbbbb;white-space:pre;letter-spacing:-0.136px;">webhooks</div>
<svg style="position:absolute;left:63px;top:885px" width="12" height="14" viewBox="0 0 12 14"><path d="M0,4 L4,0 V4 Z" fill="#9aa7b0" opacity=".8"/><path d="M5,0 H11 V14 H0 V5 H5 Z" fill="#9aa7b0"/><path d="M2,7 H9 M2,9.5 H9 M2,12 H9" stroke="#3c3f41" stroke-width="1"/></svg>
<div style="position:absolute;left:79px;top:884px;font:normal 15.3px/1 'Liberation Sans', sans-serif;color:#848504;white-space:pre;letter-spacing:0.220px;">ghostdriver.log</div>
</div>
<div style="position:absolute;left:470px;top:451.5px;width:9px;height:375px;background:rgba(166,166,166,0.28)"></div>
<div style="position:absolute;left:479px;top:87px;width:1px;height:920px;background:#323232"></div>
<div style="position:absolute;left:480px;top:87px;width:1028px;height:920px;overflow:hidden">
<div style="position:absolute;left:-20px;top:6px;font:normal 15.3px/1 'Liberation Sans', sans-serif;color:#6897bb;white-space:pre;letter-spacing:-0.144px;">permissions.py</div>
<svg style="position:absolute;left:86.9px;top:8.900000000000006px" width="8.2" height="8.2" viewBox="0 0 8.2 8.2"><path d="M0.4,0.4 L7.8,7.8 M7.8,0.4 L0.4,7.8" stroke="#666b6e" stroke-width="0.95"/></svg>
<svg style="position:absolute;left:112px;top:5px" width="16" height="17" viewBox="0 0 16 17"><path d="M1,5 L5,1 V5 Z" fill="#8c99a2" opacity=".85"/><path d="M6,1 H11 V15 H1 V6 H6 Z" fill="#8c99a2"/><g transform="translate(4.9,7) scale(.93)"><path d="M4.9,0 C2.4,0 2.6,1.1 2.6,1.1 V2.2 H5 V2.6 H1.6 C1.6,2.6 0,2.4 0,5 C0,7.5 1.4,7.4 1.4,7.4 H2.3 V6.2 C2.3,6.2 2.2,4.8 3.7,4.8 H6.1 C6.1,4.8 7.4,4.8 7.4,3.5 V1.3 C7.4,1.3 7.6,0 4.9,0 Z" fill="#3c3f41" stroke="#3c3f41" stroke-width="2.2" stroke-linejoin="round"/><path d="M5.1,10 C7.6,10 7.4,8.9 7.4,8.9 V7.8 H5 V7.4 H8.4 C8.4,7.4 10,7.6 10,5 C10,2.5 8.6,2.6 8.6,2.6 H7.7 V3.8 C7.7,3.8 7.8,5.2 6.3,5.2 H3.9 C3.9,5.2 2.6,5.2 2.6,6.5 V8.7 C2.6,8.7 2.4,10 5.1,10 Z" fill="#3c3f41" stroke="#3c3f41" stroke-width="2.2" stroke-linejoin="round"/><path d="M4.9,0 C2.4,0 2.6,1.1 2.6,1.1 V2.2 H5 V2.6 H1.6 C1.6,2.6 0,2.4 0,5 C0,7.5 1.4,7.4 1.4,7.4 H2.3 V6.2 C2.3,6.2 2.2,4.8 3.7,4.8 H6.1 C6.1,4.8 7.4,4.8 7.4,3.5 V1.3 C7.4,1.3 7.6,0 4.9,0 Z" fill="#3e9fd8"/><path d="M5.1,10 C7.6,10 7.4,8.9 7.4,8.9 V7.8 H5 V7.4 H8.4 C8.4,7.4 10,7.6 10,5 C10,2.5 8.6,2.6 8.6,2.6 H7.7 V3.8 C7.7,3.8 7.8,5.2 6.3,5.2 H3.9 C3.9,5.2 2.6,5.2 2.6,6.5 V8.7 C2.6,8.7 2.4,10 5.1,10 Z" fill="#f9c71b"/></g></svg>
<div style="position:absolute;left:130px;top:6px;font:normal 15.3px/1 'Liberation Sans', sans-serif;color:#6897bb;white-space:pre;letter-spacing:-0.019px;">houses/models.py</div>
<svg style="position:absolute;left:259.9px;top:8.900000000000006px" width="8.2" height="8.2" viewBox="0 0 8.2 8.2"><path d="M0.4,0.4 L7.8,7.8 M7.8,0.4 L0.4,7.8" stroke="#666b6e" stroke-width="0.95"/></svg>
<svg style="position:absolute;left:285px;top:5px" width="16" height="17" viewBox="0 0 16 17"><path d="M1,5 L5,1 V5 Z" fill="#8c99a2" opacity=".85"/><path d="M6,1 H11 V15 H1 V6 H6 Z" fill="#8c99a2"/><g transform="translate(4.9,7) scale(.93)"><path d="M4.9,0 C2.4,0 2.6,1.1 2.6,1.1 V2.2 H5 V2.6 H1.6 C1.6,2.6 0,2.4 0,5 C0,7.5 1.4,7.4 1.4,7.4 H2.3 V6.2 C2.3,6.2 2.2,4.8 3.7,4.8 H6.1 C6.1,4.8 7.4,4.8 7.4,3.5 V1.3 C7.4,1.3 7.6,0 4.9,0 Z" fill="#3c3f41" stroke="#3c3f41" stroke-width="2.2" stroke-linejoin="round"/><path d="M5.1,10 C7.6,10 7.4,8.9 7.4,8.9 V7.8 H5 V7.4 H8.4 C8.4,7.4 10,7.6 10,5 C10,2.5 8.6,2.6 8.6,2.6 H7.7 V3.8 C7.7,3.8 7.8,5.2 6.3,5.2 H3.9 C3.9,5.2 2.6,5.2 2.6,6.5 V8.7 C2.6,8.7 2.4,10 5.1,10 Z" fill="#3c3f41" stroke="#3c3f41" stroke-width="2.2" stroke-linejoin="round"/><path d="M4.9,0 C2.4,0 2.6,1.1 2.6,1.1 V2.2 H5 V2.6 H1.6 C1.6,2.6 0,2.4 0,5 C0,7.5 1.4,7.4 1.4,7.4 H2.3 V6.2 C2.3,6.2 2.2,4.8 3.7,4.8 H6.1 C6.1,4.8 7.4,4.8 7.4,3.5 V1.3 C7.4,1.3 7.6,0 4.9,0 Z" fill="#3e9fd8"/><path d="M5.1,10 C7.6,10 7.4,8.9 7.4,8.9 V7.8 H5 V7.4 H8.4 C8.4,7.4 10,7.6 10,5 C10,2.5 8.6,2.6 8.6,2.6 H7.7 V3.8 C7.7,3.8 7.8,5.2 6.3,5.2 H3.9 C3.9,5.2 2.6,5.2 2.6,6.5 V8.7 C2.6,8.7 2.4,10 5.1,10 Z" fill="#f9c71b"/></g></svg>
<div style="position:absolute;left:303px;top:6px;font:normal 15.3px/1 'Liberation Sans', sans-serif;color:#6897bb;white-space:pre;letter-spacing:0.009px;">chekins/models.py</div>
<svg style="position:absolute;left:435.9px;top:8.900000000000006px" width="8.2" height="8.2" viewBox="0 0 8.2 8.2"><path d="M0.4,0.4 L7.8,7.8 M7.8,0.4 L0.4,7.8" stroke="#666b6e" stroke-width="0.95"/></svg>
<svg style="position:absolute;left:461px;top:5px" width="16" height="17" viewBox="0 0 16 17"><path d="M1,5 L5,1 V5 Z" fill="#8c99a2" opacity=".85"/><path d="M6,1 H11 V15 H1 V6 H6 Z" fill="#8c99a2"/><g transform="translate(4.9,7) scale(.93)"><path d="M4.9,0 C2.4,0 2.6,1.1 2.6,1.1 V2.2 H5 V2.6 H1.6 C1.6,2.6 0,2.4 0,5 C0,7.5 1.4,7.4 1.4,7.4 H2.3 V6.2 C2.3,6.2 2.2,4.8 3.7,4.8 H6.1 C6.1,4.8 7.4,4.8 7.4,3.5 V1.3 C7.4,1.3 7.6,0 4.9,0 Z" fill="#3c3f41" stroke="#3c3f41" stroke-width="2.2" stroke-linejoin="round"/><path d="M5.1,10 C7.6,10 7.4,8.9 7.4,8.9 V7.8 H5 V7.4 H8.4 C8.4,7.4 10,7.6 10,5 C10,2.5 8.6,2.6 8.6,2.6 H7.7 V3.8 C7.7,3.8 7.8,5.2 6.3,5.2 H3.9 C3.9,5.2 2.6,5.2 2.6,6.5 V8.7 C2.6,8.7 2.4,10 5.1,10 Z" fill="#3c3f41" stroke="#3c3f41" stroke-width="2.2" stroke-linejoin="round"/><path d="M4.9,0 C2.4,0 2.6,1.1 2.6,1.1 V2.2 H5 V2.6 H1.6 C1.6,2.6 0,2.4 0,5 C0,7.5 1.4,7.4 1.4,7.4 H2.3 V6.2 C2.3,6.2 2.2,4.8 3.7,4.8 H6.1 C6.1,4.8 7.4,4.8 7.4,3.5 V1.3 C7.4,1.3 7.6,0 4.9,0 Z" fill="#3e9fd8"/><path d="M5.1,10 C7.6,10 7.4,8.9 7.4,8.9 V7.8 H5 V7.4 H8.4 C8.4,7.4 10,7.6 10,5 C10,2.5 8.6,2.6 8.6,2.6 H7.7 V3.8 C7.7,3.8 7.8,5.2 6.3,5.2 H3.9 C3.9,5.2 2.6,5.2 2.6,6.5 V8.7 C2.6,8.7 2.4,10 5.1,10 Z" fill="#f9c71b"/></g></svg>
<div style="position:absolute;left:479px;top:6px;font:normal 15.3px/1 'Liberation Sans', sans-serif;color:#6897bb;white-space:pre;letter-spacing:0.115px;">geo/models.py</div>
<svg style="position:absolute;left:586.9px;top:8.900000000000006px" width="8.2" height="8.2" viewBox="0 0 8.2 8.2"><path d="M0.4,0.4 L7.8,7.8 M7.8,0.4 L0.4,7.8" stroke="#666b6e" stroke-width="0.95"/></svg>
<svg style="position:absolute;left:612px;top:5px" width="16" height="17" viewBox="0 0 16 17"><path d="M1,5 L5,1 V5 Z" fill="#8c99a2" opacity=".85"/><path d="M6,1 H11 V15 H1 V6 H6 Z" fill="#8c99a2"/><g transform="translate(4.9,7) scale(.93)"><path d="M4.9,0 C2.4,0 2.6,1.1 2.6,1.1 V2.2 H5 V2.6 H1.6 C1.6,2.6 0,2.4 0,5 C0,7.5 1.4,7.4 1.4,7.4 H2.3 V6.2 C2.3,6.2 2.2,4.8 3.7,4.8 H6.1 C6.1,4.8 7.4,4.8 7.4,3.5 V1.3 C7.4,1.3 7.6,0 4.9,0 Z" fill="#3c3f41" stroke="#3c3f41" stroke-width="2.2" stroke-linejoin="round"/><path d="M5.1,10 C7.6,10 7.4,8.9 7.4,8.9 V7.8 H5 V7.4 H8.4 C8.4,7.4 10,7.6 10,5 C10,2.5 8.6,2.6 8.6,2.6 H7.7 V3.8 C7.7,3.8 7.8,5.2 6.3,5.2 H3.9 C3.9,5.2 2.6,5.2 2.6,6.5 V8.7 C2.6,8.7 2.4,10 5.1,10 Z" fill="#3c3f41" stroke="#3c3f41" stroke-width="2.2" stroke-linejoin="round"/><path d="M4.9,0 C2.4,0 2.6,1.1 2.6,1.1 V2.2 H5 V2.6 H1.6 C1.6,2.6 0,2.4 0,5 C0,7.5 1.4,7.4 1.4,7.4 H2.3 V6.2 C2.3,6.2 2.2,4.8 3.7,4.8 H6.1 C6.1,4.8 7.4,4.8 7.4,3.5 V1.3 C7.4,1.3 7.6,0 4.9,0 Z" fill="#3e9fd8"/><path d="M5.1,10 C7.6,10 7.4,8.9 7.4,8.9 V7.8 H5 V7.4 H8.4 C8.4,7.4 10,7.6 10,5 C10,2.5 8.6,2.6 8.6,2.6 H7.7 V3.8 C7.7,3.8 7.8,5.2 6.3,5.2 H3.9 C3.9,5.2 2.6,5.2 2.6,6.5 V8.7 C2.6,8.7 2.4,10 5.1,10 Z" fill="#f9c71b"/></g></svg>
<div style="position:absolute;left:630px;top:6px;font:normal 15.3px/1 'Liberation Sans', sans-serif;color:#6897bb;white-space:pre;letter-spacing:-0.200px;">housing.py</div>
<svg style="position:absolute;left:708.9px;top:8.900000000000006px" width="8.2" height="8.2" viewBox="0 0 8.2 8.2"><path d="M0.4,0.4 L7.8,7.8 M7.8,0.4 L0.4,7.8" stroke="#666b6e" stroke-width="0.95"/></svg>
<svg style="position:absolute;left:734px;top:5px" width="16" height="17" viewBox="0 0 16 17"><path d="M1,5 L5,1 V5 Z" fill="#8c99a2" opacity=".85"/><path d="M6,1 H11 V15 H1 V6 H6 Z" fill="#8c99a2"/><g transform="translate(4.9,7) scale(.93)"><path d="M4.9,0 C2.4,0 2.6,1.1 2.6,1.1 V2.2 H5 V2.6 H1.6 C1.6,2.6 0,2.4 0,5 C0,7.5 1.4,7.4 1.4,7.4 H2.3 V6.2 C2.3,6.2 2.2,4.8 3.7,4.8 H6.1 C6.1,4.8 7.4,4.8 7.4,3.5 V1.3 C7.4,1.3 7.6,0 4.9,0 Z" fill="#3c3f41" stroke="#3c3f41" stroke-width="2.2" stroke-linejoin="round"/><path d="M5.1,10 C7.6,10 7.4,8.9 7.4,8.9 V7.8 H5 V7.4 H8.4 C8.4,7.4 10,7.6 10,5 C10,2.5 8.6,2.6 8.6,2.6 H7.7 V3.8 C7.7,3.8 7.8,5.2 6.3,5.2 H3.9 C3.9,5.2 2.6,5.2 2.6,6.5 V8.7 C2.6,8.7 2.4,10 5.1,10 Z" fill="#3c3f41" stroke="#3c3f41" stroke-width="2.2" stroke-linejoin="round"/><path d="M4.9,0 C2.4,0 2.6,1.1 2.6,1.1 V2.2 H5 V2.6 H1.6 C1.6,2.6 0,2.4 0,5 C0,7.5 1.4,7.4 1.4,7.4 H2.3 V6.2 C2.3,6.2 2.2,4.8 3.7,4.8 H6.1 C6.1,4.8 7.4,4.8 7.4,3.5 V1.3 C7.4,1.3 7.6,0 4.9,0 Z" fill="#3e9fd8"/><path d="M5.1,10 C7.6,10 7.4,8.9 7.4,8.9 V7.8 H5 V7.4 H8.4 C8.4,7.4 10,7.6 10,5 C10,2.5 8.6,2.6 8.6,2.6 H7.7 V3.8 C7.7,3.8 7.8,5.2 6.3,5.2 H3.9 C3.9,5.2 2.6,5.2 2.6,6.5 V8.7 C2.6,8.7 2.4,10 5.1,10 Z" fill="#f9c71b"/></g></svg>
<div style="position:absolute;left:752px;top:6px;font:normal 15.3px/1 'Liberation Sans', sans-serif;color:#6897bb;white-space:pre;letter-spacing:0.034px;">test_geo_location.py</div>
<svg style="position:absolute;left:899.9px;top:8.900000000000006px" width="8.2" height="8.2" viewBox="0 0 8.2 8.2"><path d="M0.4,0.4 L7.8,7.8 M7.8,0.4 L0.4,7.8" stroke="#666b6e" stroke-width="0.95"/></svg>
<svg style="position:absolute;left:925px;top:5px" width="16" height="17" viewBox="0 0 16 17"><path d="M1,5 L5,1 V5 Z" fill="#8c99a2" opacity=".85"/><path d="M6,1 H11 V15 H1 V6 H6 Z" fill="#8c99a2"/><g transform="translate(4.9,7) scale(.93)"><path d="M4.9,0 C2.4,0 2.6,1.1 2.6,1.1 V2.2 H5 V2.6 H1.6 C1.6,2.6 0,2.4 0,5 C0,7.5 1.4,7.4 1.4,7.4 H2.3 V6.2 C2.3,6.2 2.2,4.8 3.7,4.8 H6.1 C6.1,4.8 7.4,4.8 7.4,3.5 V1.3 C7.4,1.3 7.6,0 4.9,0 Z" fill="#3c3f41" stroke="#3c3f41" stroke-width="2.2" stroke-linejoin="round"/><path d="M5.1,10 C7.6,10 7.4,8.9 7.4,8.9 V7.8 H5 V7.4 H8.4 C8.4,7.4 10,7.6 10,5 C10,2.5 8.6,2.6 8.6,2.6 H7.7 V3.8 C7.7,3.8 7.8,5.2 6.3,5.2 H3.9 C3.9,5.2 2.6,5.2 2.6,6.5 V8.7 C2.6,8.7 2.4,10 5.1,10 Z" fill="#3c3f41" stroke="#3c3f41" stroke-width="2.2" stroke-linejoin="round"/><path d="M4.9,0 C2.4,0 2.6,1.1 2.6,1.1 V2.2 H5 V2.6 H1.6 C1.6,2.6 0,2.4 0,5 C0,7.5 1.4,7.4 1.4,7.4 H2.3 V6.2 C2.3,6.2 2.2,4.8 3.7,4.8 H6.1 C6.1,4.8 7.4,4.8 7.4,3.5 V1.3 C7.4,1.3 7.6,0 4.9,0 Z" fill="#3e9fd8"/><path d="M5.1,10 C7.6,10 7.4,8.9 7.4,8.9 V7.8 H5 V7.4 H8.4 C8.4,7.4 10,7.6 10,5 C10,2.5 8.6,2.6 8.6,2.6 H7.7 V3.8 C7.7,3.8 7.8,5.2 6.3,5.2 H3.9 C3.9,5.2 2.6,5.2 2.6,6.5 V8.7 C2.6,8.7 2.4,10 5.1,10 Z" fill="#f9c71b"/></g></svg>
<div style="position:absolute;left:943px;top:6px;font:normal 15.3px/1 'Liberation Sans', sans-serif;color:#6897bb;white-space:pre;letter-spacing:0.019px;">payments/m</div>
<div style="position:absolute;left:0;top:26px;width:1028px;height:1px;background:#323232"></div>
<div style="position:absolute;left:0;top:27px;width:442px;height:28px;background:#45494a"></div>
<div style="position:absolute;left:442px;top:27px;width:1px;height:28px;background:#323232"></div>
<svg style="position:absolute;left:7.399999999999977px;top:35.400000000000006px" width="18" height="14" viewBox="0 0 18 14"><circle cx="5.6" cy="5.6" r="4.5" fill="none" stroke="#8a949a" stroke-width="1.2"/><path d="M8.8,8.8 L12.4,12.4" stroke="#8a949a" stroke-width="1.4"/><path d="M12,5.5 H16.6 L14.3,8.4 Z" fill="#8a949a"/></svg>
<div style="position:absolute;left:30px;top:34px;font:normal 14.5px/1 'Liberation Sans', sans-serif;color:#bbbbbb;white-space:pre;letter-spacing:0.403px;">event</div>
<svg style="position:absolute;left:315px;top:38px" width="8" height="8" viewBox="0 0 8 8"><path d="M0.4,0.4 L7.6,7.6 M7.6,0.4 L0.4,7.6" stroke="#707375" stroke-width="1"/></svg>
<svg style="position:absolute;left:335px;top:37px" width="13" height="12" viewBox="0 0 13 12"><path d="M0.5,1.6 H8.6 C12.6,1.6 12.6,7.6 8.6,7.6 H3.4" fill="none" stroke="#64676a" stroke-width="1.2"/><path d="M5.6,4.6 L2.4,7.6 L5.6,10.6 Z" fill="#64676a"/></svg>
<div style="position:absolute;left:358px;top:32px;width:1px;height:20px;background:#5a5d5f"></div>
<div style="position:absolute;left:364px;top:31px;width:22px;height:22px;background:#5c6164;border-radius:3px"></div>
<div style="position:absolute;left:367.4px;top:35.5px;font:bold 13.4px/1 'Liberation Sans', sans-serif;color:#3bb6e6;white-space:pre;letter-spacing:-0.963px;">Cc</div>
<div style="position:absolute;left:390px;top:31px;width:22px;height:22px;background:#5c6164;border-radius:3px"></div>
<div style="position:absolute;left:394.70000000000005px;top:35.5px;font:bold 13.4px/1 'Liberation Sans', sans-serif;color:#3bb6e6;white-space:pre;letter-spacing:-0.041px;">W</div>
<svg style="position:absolute;left:421px;top:35px" width="12" height="13" viewBox="0 0 12 13"><rect x="0.8" y="10" width="1.9" height="1.9" fill="#73767a"/><path d="M7.2,2.6 V10 M4,4.45 L10.4,8.15 M10.4,4.45 L4,8.15" stroke="#73767a" stroke-width="1.2"/></svg>
<div style="position:absolute;left:464.5px;top:34.5px;font:normal 13px/1 'Liberation Sans', sans-serif;color:#bbbbbb;white-space:pre;letter-spacing:-0.138px;">15 results</div>
<svg style="position:absolute;left:540px;top:35px" width="12" height="12" viewBox="0 0 12 12"><path d="M6,11.8 V1.4 M1.2,6 L6,1.2 L10.8,6" fill="none" stroke="#afb1b3" stroke-width="1.6"/></svg>
<svg style="position:absolute;left:566px;top:35px" width="12" height="12" viewBox="0 0 12 12"><path d="M6,0.2 V10.6 M1.2,6 L6,10.8 L10.8,6" fill="none" stroke="#afb1b3" stroke-width="1.6"/></svg>
<svg style="position:absolute;left:591.5px;top:34.5px" width="13" height="13" viewBox="0 0 13 13"><rect x="0.75" y="0.75" width="11.5" height="11.5" fill="none" stroke="#afb1b3" stroke-width="1.5"/><rect x="1" y="8" width="6.4" height="4" fill="#afb1b3"/></svg>
<div style="position:absolute;left:614px;top:31px;width:1px;height:20px;background:#55585a"></div>
<svg style="position:absolute;left:623px;top:32px" width="18" height="18" viewBox="0 0 18 18"><path d="M6,1.8 V12 M0.9,6.9 H11.1" stroke="#afb1b3" stroke-width="1.8"/><path d="M9.2,8.8 h2.6 M9.2,16.8 h2.6 M10.5,8.8 v8 M13.0,8.8 h2.6 M13.0,16.8 h2.6 M14.299999999999999,8.8 v8" stroke="#afb1b3" stroke-width="0.9" fill="none"/></svg>
<svg style="position:absolute;left:649px;top:32px" width="18" height="18" viewBox="0 0 18 18"><path d="M1.3,6.8 H11" stroke="#afb1b3" stroke-width="1.9"/><path d="M9.4,8.8 h2.6 M9.4,16.8 h2.6 M10.700000000000001,8.8 v8 M13.2,8.8 h2.6 M13.2,16.8 h2.6 M14.5,8.8 v8" stroke="#afb1b3" stroke-width="0.9" fill="none"/></svg>
<svg style="position:absolute;left:674px;top:32px" width="19" height="18" viewBox="0 0 19 18"><path d="M8,3.2 H1.6 V10.6 H9.4 V8" fill="none" stroke="#afb1b3" stroke-width="1.2"/><path d="M3.6,6.2 L5.6,8.2 L10,3.4" fill="none" stroke="#afb1b3" stroke-width="1.5"/><path d="M10.2,8.8 h2.6 M10.2,16.8 h2.6 M11.5,8.8 v8 M14.0,8.8 h2.6 M14.0,16.8 h2.6 M15.299999999999999,8.8 v8" stroke="#afb1b3" stroke-width="0.9" fill="none"/></svg>
<div style="position:absolute;left:699px;top:31px;width:1px;height:20px;background:#55585a"></div>
<svg style="position:absolute;left:709px;top:34px" width="15" height="15" viewBox="0 0 15 15"><path d="M0.6,2.6 H11.4 M0.6,6.6 H6.6 M0.6,10.6 H6.6" stroke="#afb1b3" stroke-width="1.7"/><path d="M8.6,5.6 H13.8 M8.6,13.2 H13.8 M11.2,5.6 V13.2" stroke="#afb1b3" stroke-width="1.1"/></svg>
<svg style="position:absolute;left:736px;top:35px" width="13" height="12" viewBox="0 0 13 12"><path d="M0,0 H12.4 L7.6,5.6 V12 H4.8 V5.6 Z" fill="#afb1b3"/></svg>
<div style="position:absolute;left:0;top:55px;width:1028px;height:840px;background:#2b2b2b"></div>
<div style="position:absolute;left:0;top:55px;width:65px;height:840px;background:#313335"></div>
<div style="position:absolute;left:66px;top:55px;width:962px;height:23px;background:#323232"></div>
<div style="position:absolute;left:65px;top:55px;width:1px;height:840px;background:#555555"></div>
<div style="position:absolute;left:56px;top:56px;width:9px;height:22px;background:#4a4535"></div>
<div style="position:absolute;left:56px;top:144px;width:9px;height:44px;background:#384d39"></div>
<div style="position:absolute;left:56px;top:298px;width:9px;height:22px;background:#374853"></div>
<div style="position:absolute;left:56px;top:408px;width:9px;height:66px;background:#374853"></div>
<div style="position:absolute;left:56px;top:694px;width:9px;height:110px;background:#374853"></div>
<div style="position:absolute;left:56px;top:826px;width:9px;height:22px;background:#374853"></div>
<svg style="position:absolute;left:56px;top:74px" width="9" height="9" viewBox="0 0 9 9"><path d="M0,0.3 L8.6,4.5 L0,8.7 Z" fill="#6a7986"/></svg>
<svg style="position:absolute;left:56px;top:118px" width="9" height="9" viewBox="0 0 9 9"><path d="M0,0.3 L8.6,4.5 L0,8.7 Z" fill="#6a7986"/></svg>
<svg style="position:absolute;left:56px;top:206px" width="9" height="9" viewBox="0 0 9 9"><path d="M0,0.3 L8.6,4.5 L0,8.7 Z" fill="#6a7986"/></svg>
<svg style="position:absolute;left:56px;top:514px" width="9" height="9" viewBox="0 0 9 9"><path d="M0,0.3 L8.6,4.5 L0,8.7 Z" fill="#6a7986"/></svg>
<svg style="position:absolute;left:56px;top:866px" width="9" height="9" viewBox="0 0 9 9"><path d="M0,0.3 L8.6,4.5 L0,8.7 Z" fill="#6a7986"/></svg>
<svg style="position:absolute;left:61px;top:107px" width="9" height="12" viewBox="0 0 9 12"><path d="M0.5,0.5 H8.5 V7.6 L4.5,11.5 L0.5,7.6 Z" fill="#2b2b2b" stroke="#6b6b6b" stroke-width="1.1"/><path d="M2.2,4.5 H6.8" stroke="#7a7a7a" stroke-width="1.1"/></svg>
<svg style="position:absolute;left:61px;top:151px" width="9" height="12" viewBox="0 0 9 12"><path d="M0.5,0.5 H8.5 V7.6 L4.5,11.5 L0.5,7.6 Z" fill="#2b2b2b" stroke="#6b6b6b" stroke-width="1.1"/><path d="M2.2,4.5 H6.8" stroke="#7a7a7a" stroke-width="1.1"/></svg>
<svg style="position:absolute;left:61px;top:195px" width="9" height="12" viewBox="0 0 9 12"><path d="M0.5,0.5 H8.5 V7.6 L4.5,11.5 L0.5,7.6 Z" fill="#2b2b2b" stroke="#6b6b6b" stroke-width="1.1"/><path d="M2.2,4.5 H6.8" stroke="#7a7a7a" stroke-width="1.1"/></svg>
<svg style="position:absolute;left:61px;top:305px" width="9" height="12" viewBox="0 0 9 12"><path d="M0.5,0.5 H8.5 V7.6 L4.5,11.5 L0.5,7.6 Z" fill="#2b2b2b" stroke="#6b6b6b" stroke-width="1.1"/><path d="M2.2,4.5 H6.8" stroke="#7a7a7a" stroke-width="1.1"/></svg>
<svg style="position:absolute;left:61px;top:525px" width="9" height="12" viewBox="0 0 9 12"><path d="M0.5,0.5 H8.5 V7.6 L4.5,11.5 L0.5,7.6 Z" fill="#2b2b2b" stroke="#6b6b6b" stroke-width="1.1"/><path d="M2.2,4.5 H6.8" stroke="#7a7a7a" stroke-width="1.1"/></svg>
<svg style="position:absolute;left:61px;top:613px" width="9" height="12" viewBox="0 0 9 12"><path d="M0.5,0.5 H8.5 V7.6 L4.5,11.5 L0.5,7.6 Z" fill="#2b2b2b" stroke="#6b6b6b" stroke-width="1.1"/><path d="M2.2,4.5 H6.8" stroke="#7a7a7a" stroke-width="1.1"/></svg>
<svg style="position:absolute;left:61px;top:701px" width="9" height="12" viewBox="0 0 9 12"><path d="M0.5,0.5 H8.5 V7.6 L4.5,11.5 L0.5,7.6 Z" fill="#2b2b2b" stroke="#6b6b6b" stroke-width="1.1"/><path d="M2.2,4.5 H6.8" stroke="#7a7a7a" stroke-width="1.1"/></svg>
<svg style="position:absolute;left:61px;top:877px" width="9" height="12" viewBox="0 0 9 12"><path d="M0.5,0.5 H8.5 V7.6 L4.5,11.5 L0.5,7.6 Z" fill="#2b2b2b" stroke="#6b6b6b" stroke-width="1.1"/><path d="M2.2,4.5 H6.8" stroke="#7a7a7a" stroke-width="1.1"/></svg>
<svg style="position:absolute;left:61px;top:170px" width="9" height="12" viewBox="0 0 9 12"><path d="M4.5,0.5 L8.5,4.4 V11.5 H0.5 V4.4 Z" fill="#2b2b2b" stroke="#6b6b6b" stroke-width="1.1"/><path d="M2.2,7.5 H6.8" stroke="#7a7a7a" stroke-width="1.1"/></svg>
<svg style="position:absolute;left:61px;top:500px" width="9" height="12" viewBox="0 0 9 12"><path d="M4.5,0.5 L8.5,4.4 V11.5 H0.5 V4.4 Z" fill="#2b2b2b" stroke="#6b6b6b" stroke-width="1.1"/><path d="M2.2,7.5 H6.8" stroke="#7a7a7a" stroke-width="1.1"/></svg>
<svg style="position:absolute;left:61px;top:588px" width="9" height="12" viewBox="0 0 9 12"><path d="M4.5,0.5 L8.5,4.4 V11.5 H0.5 V4.4 Z" fill="#2b2b2b" stroke="#6b6b6b" stroke-width="1.1"/><path d="M2.2,7.5 H6.8" stroke="#7a7a7a" stroke-width="1.1"/></svg>
<svg style="position:absolute;left:61px;top:676px" width="9" height="12" viewBox="0 0 9 12"><path d="M4.5,0.5 L8.5,4.4 V11.5 H0.5 V4.4 Z" fill="#2b2b2b" stroke="#6b6b6b" stroke-width="1.1"/><path d="M2.2,7.5 H6.8" stroke="#7a7a7a" stroke-width="1.1"/></svg>
<svg style="position:absolute;left:61px;top:786px" width="9" height="12" viewBox="0 0 9 12"><path d="M4.5,0.5 L8.5,4.4 V11.5 H0.5 V4.4 Z" fill="#2b2b2b" stroke="#6b6b6b" stroke-width="1.1"/><path d="M2.2,7.5 H6.8" stroke="#7a7a7a" stroke-width="1.1"/></svg>
<div style="position:absolute;left:101px;top:210px;width:1px;height:594px;background:#393939"></div>
<div style="position:absolute;left:133px;top:320px;width:1px;height:198px;background:#393939"></div>
<div style="position:absolute;left:133px;top:540px;width:1px;height:66px;background:#393939"></div>
<div style="position:absolute;left:133px;top:628px;width:1px;height:66px;background:#393939"></div>
<div style="position:absolute;left:133px;top:716px;width:1px;height:88px;background:#393939"></div>
<div style="position:absolute;left:165px;top:408px;width:1px;height:88px;background:#393939"></div>
<div style="position:absolute;left:5px;top:57.5px;font:12.7px/22px 'Liberation Mono', monospace;letter-spacing:-0.45px;color:#a4a3a3">375</div>
<div style="position:absolute;left:5px;top:79.5px;font:12.7px/22px 'Liberation Mono', monospace;letter-spacing:-0.45px;color:#606366">376</div>
<div style="position:absolute;left:5px;top:101.5px;font:12.7px/22px 'Liberation Mono', monospace;letter-spacing:-0.45px;color:#606366">377</div>
<div style="position:absolute;left:5px;top:123.5px;font:12.7px/22px 'Liberation Mono', monospace;letter-spacing:-0.45px;color:#606366">378</div>
<div style="position:absolute;left:5px;top:145.5px;font:12.7px/22px 'Liberation Mono', monospace;letter-spacing:-0.45px;color:#606366">379</div>
<div style="position:absolute;left:5px;top:167.5px;font:12.7px/22px 'Liberation Mono', monospace;letter-spacing:-0.45px;color:#606366">380</div>
<div style="position:absolute;left:5px;top:189.5px;font:12.7px/22px 'Liberation Mono', monospace;letter-spacing:-0.45px;color:#606366">381</div>
<div style="position:absolute;left:5px;top:211.5px;font:12.7px/22px 'Liberation Mono', monospace;letter-spacing:-0.45px;color:#606366">382</div>
<div style="position:absolute;left:5px;top:233.5px;font:12.7px/22px 'Liberation Mono', monospace;letter-spacing:-0.45px;color:#606366">383</div>
<div style="position:absolute;left:5px;top:255.5px;font:12.7px/22px 'Liberation Mono', monospace;letter-spacing:-0.45px;color:#606366">384</div>
<div style="position:absolute;left:5px;top:277.5px;font:12.7px/22px 'Liberation Mono', monospace;letter-spacing:-0.45px;color:#606366">385</div>
<div style="position:absolute;left:5px;top:299.5px;font:12.7px/22px 'Liberation Mono', monospace;letter-spacing:-0.45px;color:#606366">386</div>
<div style="position:absolute;left:5px;top:321.5px;font:12.7px/22px 'Liberation Mono', monospace;letter-spacing:-0.45px;color:#606366">387</div>
<div style="position:absolute;left:5px;top:343.5px;font:12.7px/22px 'Liberation Mono', monospace;letter-spacing:-0.45px;color:#606366">388</div>
<div style="position:absolute;left:5px;top:365.5px;font:12.7px/22px 'Liberation Mono', monospace;letter-spacing:-0.45px;color:#606366">389</div>
<div style="position:absolute;left:5px;top:387.5px;font:12.7px/22px 'Liberation Mono', monospace;letter-spacing:-0.45px;color:#606366">390</div>
<div style="position:absolute;left:5px;top:409.5px;font:12.7px/22px 'Liberation Mono', monospace;letter-spacing:-0.45px;color:#606366">391</div>
<div style="position:absolute;left:5px;top:431.5px;font:12.7px/22px 'Liberation Mono', monospace;letter-spacing:-0.45px;color:#606366">392</div>
<div style="position:absolute;left:5px;top:453.5px;font:12.7px/22px 'Liberation Mono', monospace;letter-spacing:-0.45px;color:#606366">393</div>
<div style="position:absolute;left:5px;top:475.5px;font:12.7px/22px 'Liberation Mono', monospace;letter-spacing:-0.45px;color:#606366">394</div>
<div style="position:absolute;left:5px;top:497.5px;font:12.7px/22px 'Liberation Mono', monospace;letter-spacing:-0.45px;color:#606366">395</div>
<div style="position:absolute;left:5px;top:519.5px;font:12.7px/22px 'Liberation Mono', monospace;letter-spacing:-0.45px;color:#606366">396</div>
<div style="position:absolute;left:5px;top:541.5px;font:12.7px/22px 'Liberation Mono', monospace;letter-spacing:-0.45px;color:#606366">397</div>
<div style="position:absolute;left:5px;top:563.5px;font:12.7px/22px 'Liberation Mono', monospace;letter-spacing:-0.45px;color:#606366">398</div>
<div style="position:absolute;left:5px;top:585.5px;font:12.7px/22px 'Liberation Mono', monospace;letter-spacing:-0.45px;color:#606366">399</div>
<div style="position:absolute;left:5px;top:607.5px;font:12.7px/22px 'Liberation Mono', monospace;letter-spacing:-0.45px;color:#606366">400</div>
<div style="position:absolute;left:5px;top:629.5px;font:12.7px/22px 'Liberation Mono', monospace;letter-spacing:-0.45px;color:#606366">401</div>
<div style="position:absolute;left:5px;top:651.5px;font:12.7px/22px 'Liberation Mono', monospace;letter-spacing:-0.45px;color:#606366">402</div>
<div style="position:absolute;left:5px;top:673.5px;font:12.7px/22px 'Liberation Mono', monospace;letter-spacing:-0.45px;color:#606366">403</div>
<div style="position:absolute;left:5px;top:695.5px;font:12.7px/22px 'Liberation Mono', monospace;letter-spacing:-0.45px;color:#606366">404</div>
<div style="position:absolute;left:5px;top:717.5px;font:12.7px/22px 'Liberation Mono', monospace;letter-spacing:-0.45px;color:#606366">405</div>
<div style="position:absolute;left:5px;top:739.5px;font:12.7px/22px 'Liberation Mono', monospace;letter-spacing:-0.45px;color:#606366">406</div>
<div style="position:absolute;left:5px;top:761.5px;font:12.7px/22px 'Liberation Mono', monospace;letter-spacing:-0.45px;color:#606366">407</div>
<div style="position:absolute;left:5px;top:783.5px;font:12.7px/22px 'Liberation Mono', monospace;letter-spacing:-0.45px;color:#606366">408</div>
<div style="position:absolute;left:5px;top:805.5px;font:12.7px/22px 'Liberation Mono', monospace;letter-spacing:-0.45px;color:#606366">409</div>
<div style="position:absolute;left:5px;top:827.5px;font:12.7px/22px 'Liberation Mono', monospace;letter-spacing:-0.45px;color:#606366">410</div>
<div style="position:absolute;left:5px;top:849.5px;font:12.7px/22px 'Liberation Mono', monospace;letter-spacing:-0.45px;color:#606366">411</div>
<div style="position:absolute;left:5px;top:871.5px;font:12.7px/22px 'Liberation Mono', monospace;letter-spacing:-0.45px;color:#606366">412</div>
<div style="position:absolute;left:71px;top:57.6px;font:12.2px/22px 'Liberation Mono', monospace;letter-spacing:0.6788px;white-space:pre;-webkit-text-stroke:0.22px"><span style="color:#808080"># Stripe WebHooks</span></div>
<div style="position:absolute;left:71px;top:79.6px;font:12.2px/22px 'Liberation Mono', monospace;letter-spacing:0.6788px;white-space:pre;-webkit-text-stroke:0.22px"><span style="color:#bbb529">@method_decorator</span><span style="color:#a9b7c6">(csrf_exempt</span><span style="color:#cc7832">,</span><span style="color:#a9b7c6"> </span><span style="color:#aa4926">name</span><span style="color:#a9b7c6">=</span><span style="color:#6a8759">&#x27;dispatch&#x27;</span><span style="color:#a9b7c6">)</span></div>
<div style="position:absolute;left:71px;top:101.6px;font:12.2px/22px 'Liberation Mono', monospace;letter-spacing:0.6788px;white-space:pre;-webkit-text-stroke:0.22px"><span style="color:#cc7832">class </span><span style="color:#a9b7c6">StripeWebhookView(View):</span></div>
<div style="position:absolute;left:71px;top:123.6px;font:12.2px/22px 'Liberation Mono', monospace;letter-spacing:0.6788px;white-space:pre;-webkit-text-stroke:0.22px"></div>
<div style="position:absolute;left:71px;top:145.6px;font:12.2px/22px 'Liberation Mono', monospace;letter-spacing:0.6788px;white-space:pre;-webkit-text-stroke:0.22px"><span style="color:#808080">    # Webhooks are always sent as HTTP POST requests, so we want to ensure</span></div>
<div style="position:absolute;left:71px;top:167.6px;font:12.2px/22px 'Liberation Mono', monospace;letter-spacing:0.6788px;white-space:pre;-webkit-text-stroke:0.22px"><span style="color:#808080">    # that only POST requests are allowed in this view</span></div>
<div style="position:absolute;left:71px;top:189.6px;font:12.2px/22px 'Liberation Mono', monospace;letter-spacing:0.6788px;white-space:pre;-webkit-text-stroke:0.22px"><span style="color:#a9b7c6">    </span><span style="color:#cc7832">def </span><span style="color:#ffc66d">post</span><span style="color:#a9b7c6">(</span><span style="color:#94558d">self</span><span style="color:#cc7832">,</span><span style="color:#a9b7c6"> request):</span></div>
<div style="position:absolute;left:71px;top:211.6px;font:12.2px/22px 'Liberation Mono', monospace;letter-spacing:0.6788px;white-space:pre;-webkit-text-stroke:0.22px"><span style="color:#808080">        # set stripe api key</span></div>
<div style="position:absolute;left:71px;top:233.6px;font:12.2px/22px 'Liberation Mono', monospace;letter-spacing:0.6788px;white-space:pre;-webkit-text-stroke:0.22px"><span style="color:#a9b7c6">        stripe.api_key = settings.STRIPE_API_KEY</span></div>
<div style="position:absolute;left:71px;top:255.6px;font:12.2px/22px 'Liberation Mono', monospace;letter-spacing:0.6788px;white-space:pre;-webkit-text-stroke:0.22px"><span style="color:#808080">        # Retrieve the request&#x27;s body and parse it as JSON</span></div>
<div style="position:absolute;left:71px;top:277.6px;font:12.2px/22px 'Liberation Mono', monospace;letter-spacing:0.6788px;white-space:pre;-webkit-text-stroke:0.22px"><span style="color:#a9b7c6">        logger.info(</span><span style="color:#6a8759">&quot;</span><span style="color:#cc7832">\n</span><span style="color:#6a8759">[stripe_webhook]&gt; Notification received: </span><span style="color:#cc7832">\n</span><span style="color:#6a8759">%s</span><span style="color:#cc7832">\n\n</span><span style="color:#6a8759">&quot;</span><span style="color:#a9b7c6"> % request.body)</span></div>
<div style="position:absolute;left:471px;top:298px;width:40px;height:22px;box-sizing:border-box;background:#32593d;border:1px solid #c3c4bf;border-radius:1.5px"></div>
<div style="position:absolute;left:71px;top:299.6px;font:12.2px/22px 'Liberation Mono', monospace;letter-spacing:0.6788px;white-space:pre;-webkit-text-stroke:0.22px"><span style="color:#a9b7c6">        </span><span style="color:#cc7832">try</span><span style="color:#a9b7c6">:  </span><span style="color:#808080"># Verify the signature and build an </span><span style="color:#808080">event</span><span style="color:#808080"> object using the official Stripe library</span></div>
<div style="position:absolute;left:71px;top:321.6px;font:12.2px/22px 'Liberation Mono', monospace;letter-spacing:0.6788px;white-space:pre;-webkit-text-stroke:0.22px"><span style="color:#a9b7c6">            payload = request.body</span></div>
<div style="position:absolute;left:71px;top:343.6px;font:12.2px/22px 'Liberation Mono', monospace;letter-spacing:0.6788px;white-space:pre;-webkit-text-stroke:0.22px"><span style="color:#a9b7c6">            sig_header = request.META[</span><span style="color:#6a8759">&#x27;HTTP_STRIPE_SIGNATURE&#x27;</span><span style="color:#a9b7c6">]</span></div>
<div style="position:absolute;left:71px;top:365.6px;font:12.2px/22px 'Liberation Mono', monospace;letter-spacing:0.6788px;white-space:pre;-webkit-text-stroke:0.22px"><span style="color:#a9b7c6">            logger.info(</span><span style="color:#6a8759">&quot;</span><span style="color:#cc7832">\n</span><span style="color:#6a8759">[stripe_webhook]&gt; Checking signature: </span><span style="color:#cc7832">\n</span><span style="color:#6a8759">%s</span><span style="color:#cc7832">\n\n</span><span style="color:#6a8759">&quot;</span><span style="color:#a9b7c6"> % sig_header)</span></div>
<div style="position:absolute;left:167px;top:386px;width:40px;height:22px;box-sizing:border-box;background:#32593d;border:1px solid #3f7a4e"></div>
<div style="position:absolute;left:71px;top:387.6px;font:12.2px/22px 'Liberation Mono', monospace;letter-spacing:0.6788px;white-space:pre;-webkit-text-stroke:0.22px"><span style="color:#a9b7c6">            </span><span style="color:#a9b7c6">event</span><span style="color:#a9b7c6"> = stripe.Webhook.construct_event(</span></div>
<div style="position:absolute;left:71px;top:409.6px;font:12.2px/22px 'Liberation Mono', monospace;letter-spacing:0.6788px;white-space:pre;-webkit-text-stroke:0.22px"><span style="color:#a9b7c6">                </span><span style="color:#aa4926">payload</span><span style="color:#a9b7c6">=payload</span><span style="color:#cc7832">,</span></div>
<div style="position:absolute;left:71px;top:431.6px;font:12.2px/22px 'Liberation Mono', monospace;letter-spacing:0.6788px;white-space:pre;-webkit-text-stroke:0.22px"><span style="color:#a9b7c6">                </span><span style="color:#aa4926">sig_header</span><span style="color:#a9b7c6">=sig_header</span><span style="color:#cc7832">,</span></div>
<div style="position:absolute;left:71px;top:453.6px;font:12.2px/22px 'Liberation Mono', monospace;letter-spacing:0.6788px;white-space:pre;-webkit-text-stroke:0.22px"><span style="color:#a9b7c6">                </span><span style="color:#aa4926">tolerance</span><span style="color:#a9b7c6">=</span><span style="color:#6897bb">7300</span><span style="color:#cc7832">,</span><span style="color:#a9b7c6">  </span><span style="color:#808080"># Our server is in utc, stripe server utc+1</span></div>
<div style="position:absolute;left:71px;top:475.6px;font:12.2px/22px 'Liberation Mono', monospace;letter-spacing:0.6788px;white-space:pre;-webkit-text-stroke:0.22px"><span style="color:#a9b7c6">                </span><span style="color:#aa4926">secret</span><span style="color:#a9b7c6">=settings.STRIPE_SIGNATURE</span><span style="color:#cc7832">,</span></div>
<div style="position:absolute;left:71px;top:497.6px;font:12.2px/22px 'Liberation Mono', monospace;letter-spacing:0.6788px;white-space:pre;-webkit-text-stroke:0.22px"><span style="color:#a9b7c6">            )</span></div>
<div style="position:absolute;left:71px;top:519.6px;font:12.2px/22px 'Liberation Mono', monospace;letter-spacing:0.6788px;white-space:pre;-webkit-text-stroke:0.22px"><span style="color:#a9b7c6">        </span><span style="color:#cc7832">except </span><span style="color:#a9b7c6">ValueError </span><span style="color:#cc7832">as </span><span style="color:#a9b7c6">e:</span></div>
<div style="position:absolute;left:71px;top:541.6px;font:12.2px/22px 'Liberation Mono', monospace;letter-spacing:0.6788px;white-space:pre;-webkit-text-stroke:0.22px"><span style="color:#808080">            # Invalid payload</span></div>
<div style="position:absolute;left:71px;top:563.6px;font:12.2px/22px 'Liberation Mono', monospace;letter-spacing:0.6788px;white-space:pre;-webkit-text-stroke:0.22px"><span style="color:#a9b7c6">            logger.error(</span><span style="color:#6a8759">&quot;[stripe_webhook]&gt; ERROR Invalid payload:</span><span style="color:#cc7832">\n</span><span style="color:#6a8759">%s&quot;</span><span style="color:#a9b7c6"> % e)</span></div>
<div style="position:absolute;left:71px;top:585.6px;font:12.2px/22px 'Liberation Mono', monospace;letter-spacing:0.6788px;white-space:pre;-webkit-text-stroke:0.22px"><span style="color:#a9b7c6">            </span><span style="color:#cc7832">return </span><span style="color:#a9b7c6">HttpResponse(</span><span style="color:#aa4926">status</span><span style="color:#a9b7c6">=</span><span style="color:#6897bb">200</span><span style="color:#a9b7c6">)</span></div>
<div style="position:absolute;left:71px;top:607.6px;font:12.2px/22px 'Liberation Mono', monospace;letter-spacing:0.6788px;white-space:pre;-webkit-text-stroke:0.22px"><span style="color:#a9b7c6">        </span><span style="color:#cc7832">except </span><span style="color:#a9b7c6">stripe.error.SignatureVerificationError </span><span style="color:#cc7832">as </span><span style="color:#a9b7c6">e:</span></div>
<div style="position:absolute;left:71px;top:629.6px;font:12.2px/22px 'Liberation Mono', monospace;letter-spacing:0.6788px;white-space:pre;-webkit-text-stroke:0.22px"><span style="color:#808080">            # Invalid signature</span></div>
<div style="position:absolute;left:71px;top:651.6px;font:12.2px/22px 'Liberation Mono', monospace;letter-spacing:0.6788px;white-space:pre;-webkit-text-stroke:0.22px"><span style="color:#a9b7c6">            logger.error(</span><span style="color:#6a8759">&quot;[stripe_webhook]&gt; ERROR Invalid signature:</span><span style="color:#cc7832">\n</span><span style="color:#6a8759">%s&quot;</span><span style="color:#a9b7c6"> % e)</span></div>
<div style="position:absolute;left:71px;top:673.6px;font:12.2px/22px 'Liberation Mono', monospace;letter-spacing:0.6788px;white-space:pre;-webkit-text-stroke:0.22px"><span style="color:#a9b7c6">            </span><span style="color:#cc7832">return </span><span style="color:#a9b7c6">HttpResponse(</span><span style="color:#aa4926">status</span><span style="color:#a9b7c6">=</span><span style="color:#6897bb">200</span><span style="color:#a9b7c6">)</span></div>
<div style="position:absolute;left:71px;top:695.6px;font:12.2px/22px 'Liberation Mono', monospace;letter-spacing:0.6788px;white-space:pre;-webkit-text-stroke:0.22px"><span style="color:#a9b7c6">        </span><span style="color:#cc7832">else</span><span style="color:#a9b7c6">:  </span><span style="color:#808080"># Signature check has passed</span></div>
<div style="position:absolute;left:271px;top:716px;width:40px;height:22px;box-sizing:border-box;background:#32593d;border:1px solid #3f7a4e"></div>
<div style="position:absolute;left:71px;top:717.6px;font:12.2px/22px 'Liberation Mono', monospace;letter-spacing:0.6788px;white-space:pre;-webkit-text-stroke:0.22px"><span style="color:#a9b7c6">            event_type = </span><span style="color:#a9b7c6">event</span><span style="color:#a9b7c6">.type</span></div>
<div style="position:absolute;left:503px;top:738px;width:40px;height:22px;box-sizing:border-box;background:#32593d;border:1px solid #3f7a4e"></div>
<div style="position:absolute;left:71px;top:739.6px;font:12.2px/22px 'Liberation Mono', monospace;letter-spacing:0.6788px;white-space:pre;-webkit-text-stroke:0.22px"><span style="color:#a9b7c6">            logger.info(</span><span style="color:#6a8759">&quot;</span><span style="color:#cc7832">\n</span><span style="color:#6a8759">[stripe_webhook]&gt; Handling </span><span style="color:#6a8759">event</span><span style="color:#6a8759"> of type: </span><span style="color:#cc7832">\n</span><span style="color:#6a8759">%s</span><span style="color:#cc7832">\n\n</span><span style="color:#6a8759">&quot;</span><span style="color:#a9b7c6"> % event_type)</span></div>
<div style="position:absolute;left:575px;top:760px;width:40px;height:22px;box-sizing:border-box;background:#32593d;border:1px solid #3f7a4e"></div>
<div style="position:absolute;left:71px;top:761.6px;font:12.2px/22px 'Liberation Mono', monospace;letter-spacing:0.6788px;white-space:pre;-webkit-text-stroke:0.22px"><span style="color:#a9b7c6">            event_handlers.get(event_type</span><span style="color:#cc7832">,</span><span style="color:#a9b7c6"> on_unhandled_event)(</span><span style="color:#a9b7c6">event</span><span style="color:#a9b7c6">)</span></div>
<div style="position:absolute;left:71px;top:783.6px;font:12.2px/22px 'Liberation Mono', monospace;letter-spacing:0.6788px;white-space:pre;-webkit-text-stroke:0.22px"><span style="color:#a9b7c6">            </span><span style="color:#cc7832">return </span><span style="color:#a9b7c6">HttpResponse(</span><span style="color:#aa4926">status</span><span style="color:#a9b7c6">=</span><span style="color:#6897bb">200</span><span style="color:#a9b7c6">)</span></div>
<div style="position:absolute;left:71px;top:805.6px;font:12.2px/22px 'Liberation Mono', monospace;letter-spacing:0.6788px;white-space:pre;-webkit-text-stroke:0.22px"></div>
<div style="position:absolute;left:71px;top:827.6px;font:12.2px/22px 'Liberation Mono', monospace;letter-spacing:0.6788px;white-space:pre;-webkit-text-stroke:0.22px"></div>
<div style="position:absolute;left:71px;top:849.6px;font:12.2px/22px 'Liberation Mono', monospace;letter-spacing:0.6788px;white-space:pre;-webkit-text-stroke:0.22px"><span style="color:#808080">#  Event handlers for stripe events</span></div>
<div style="position:absolute;left:71px;top:871.6px;font:12.2px/22px 'Liberation Mono', monospace;letter-spacing:0.6788px;white-space:pre;-webkit-text-stroke:0.22px"><span style="color:#cc7832">def </span><span style="color:#ffc66d">on_trial_will_end</span><span style="color:#a9b7c6">(event_json):</span></div>
<svg style="position:absolute;left:134.5px;top:206.10000000000002px" width="33" height="5" viewBox="0 0 33 5"><path d="M0,4 L2,0.8 L4,4 L6,0.8 L8,4 L10,0.8 L12,4 L14,0.8 L16,4 L18,0.8 L20,4 L22,0.8 L24,4 L26,0.8 L28,4 L30,0.8 L32,4" fill="none" stroke="#9a9462" stroke-width="0.9"/></svg>
<div style="position:absolute;left:71px;top:58px;width:2px;height:18px;background:#c8c8c8"></div>
<svg style="position:absolute;left:79px;top:78.5px" width="12" height="15" viewBox="0 0 12 15"><circle cx="6" cy="5.3" r="5.15" fill="#f0a732"/><path d="M2.6,8.6 H9.4 L8.6,10.6 H3.4 Z" fill="#f0a732"/><path d="M3.1,12 H8.9 M4,14 H8" stroke="#c9cccf" stroke-width="1"/></svg>
<div style="position:absolute;left:0;top:895px;width:1028px;height:25px;background:#3c3f41"></div>
<div style="position:absolute;left:0;top:895px;width:1028px;height:1px;background:#323232"></div>
</div>
</body></html>
